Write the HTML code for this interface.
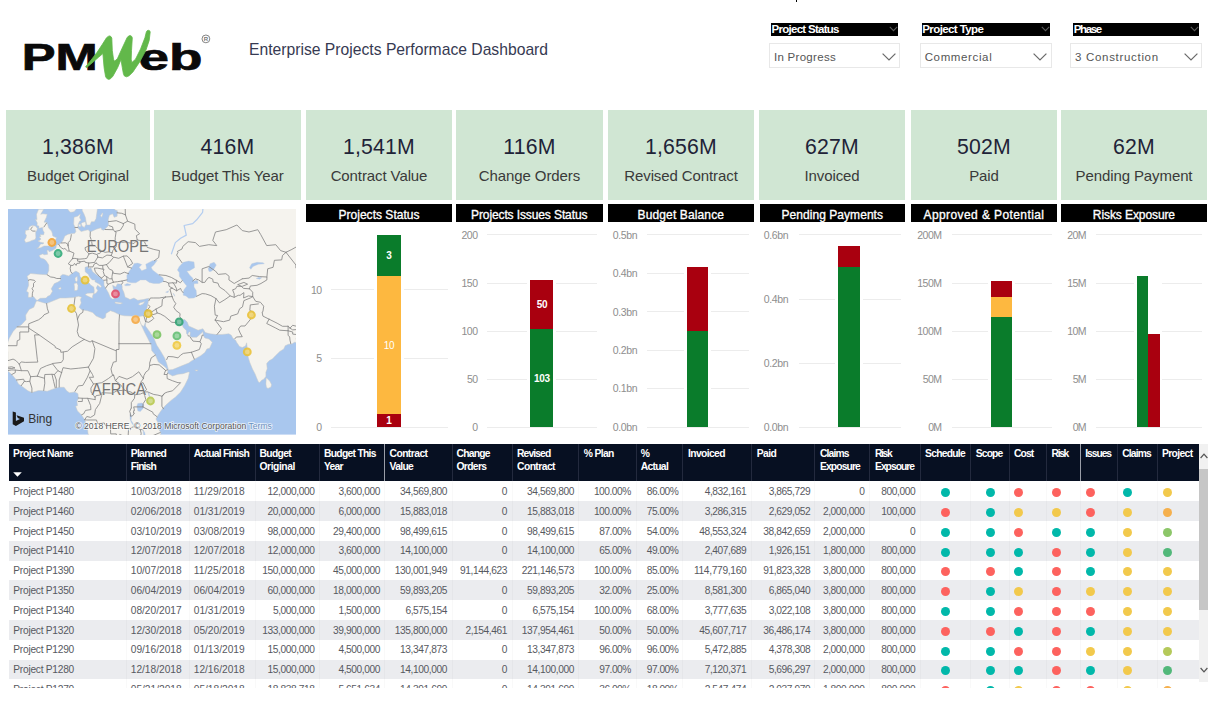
<!DOCTYPE html>
<html lang="en"><head><meta charset="utf-8"><title>Enterprise Projects Performace Dashboard</title>
<style>
*{box-sizing:border-box;margin:0;padding:0}
html,body{width:1214px;height:703px;background:#fff;overflow:hidden}
body{position:relative;font-family:"Liberation Sans",sans-serif;color:#333;-webkit-font-smoothing:antialiased}
.abs{position:absolute}
.card{position:absolute;top:110px;height:90px;background:#d0e6d3;text-align:center}
.card .v{position:absolute;left:0;right:0;top:24px;font-size:22px;line-height:26px;color:#1f2338;letter-spacing:0.2px;transform:scaleX(.965)}
.card .l{position:absolute;left:0;right:0;top:56px;font-size:15px;line-height:20px;color:#3a3a3a;letter-spacing:-0.1px}
.ch{position:absolute;top:204px;height:17px;background:#000;color:#fff;font-size:13px;line-height:17px;text-align:center;letter-spacing:-0.35px;font-weight:400}
.gl{position:absolute;height:1px;background:#ececec}
.ax{position:absolute;font-size:9.5px;line-height:12px;color:#858585;text-align:right;width:40px;letter-spacing:-0.3px}
.bar{position:absolute}
.g{background:#0a7c2b}.y{background:#fdb840}.r{background:#a9000f}
.dl{position:absolute;color:#fff;font-size:10px;line-height:11px;letter-spacing:-0.3px;text-align:center;width:30px;font-weight:700}
.sh{position:absolute;top:23px;height:12px;background:#000;color:#fff;font-size:10px;line-height:12px;letter-spacing:-0.4px;padding-left:1px;white-space:nowrap}
.sd{position:absolute;top:42px;height:26px;border:1px solid #e9e9e9;background:#fff;font-size:11px;line-height:24px;color:#444;padding-left:6px;white-space:nowrap}
.th{position:absolute;top:444px;height:37.5px;background:#080f24}
.ht{position:absolute;color:#fff;font-size:9.5px;line-height:13px;font-weight:700;letter-spacing:-0.45px;white-space:nowrap}
.sep{position:absolute;top:444px;height:37.5px;width:1px;background:#2a3145}
.row{position:absolute;left:8px;width:1191px;height:20px}
.row.alt{background:#ebecee}
.c{position:absolute;font-size:10px;line-height:20px;color:#4a4a4a;white-space:nowrap;letter-spacing:-0.25px}
.cr{text-align:right}
.dot{position:absolute;width:9px;height:9px;border-radius:50%}
</style></head>
<body>
<div class="abs" id="logo" style="left:0;top:0;width:240px;height:100px">
<svg width="240" height="100" viewBox="0 0 240 100" style="position:absolute;left:0;top:0">
<text x="21.8" y="69.6" font-family="Liberation Sans, sans-serif" font-weight="700" font-size="37.5" fill="#0a0a0a" stroke="#0a0a0a" stroke-width="0.7" textLength="76" lengthAdjust="spacingAndGlyphs">PM</text>
<text x="138.5" y="69.6" font-family="Liberation Sans, sans-serif" font-weight="700" font-size="37.5" fill="#0a0a0a" stroke="#0a0a0a" stroke-width="0.7" textLength="64" lengthAdjust="spacingAndGlyphs">eb</text>
<path d="M85.6 66.8 L91.1 60.0 L97.1 52.3 L102.2 44.6 L106.5 37.8 L108.2 36.4 L109.6 35.9 L110.9 36.5 L111.8 38.0 L112.3 50.6 L113.5 59.2 L114.6 61.3 L117.6 58.3 L121.8 48.9 L127.0 37.8 L128.5 36.1 L130.1 35.5 L131.5 36.2 L132.3 37.8 L131.5 50.6 L131.2 59.2 L131.8 62.6 L135.5 59.2 L140.6 48.9 L144.9 37.8 L146.4 31.8 L147.3 30.6 L148.5 30.3 L149.7 30.8 L150.2 32.0 L149.2 40.4 L145.8 50.6 L139.8 61.7 L132.9 72.0 L129.1 75.8 L126.5 76.8 L124.4 76.0 L123.4 73.7 L122.3 67.7 L121.0 59.6 L117.6 67.7 L112.9 76.2 L110.7 78.6 L108.9 79.4 L106.9 78.6 L105.6 76.7 L104.1 67.7 L102.9 53.6 L98.8 57.0 L92.0 63.0 L86.4 67.7 Z" fill="#62b84a" stroke="#62b84a" stroke-width="0.8" stroke-linejoin="round"/>
<circle cx="205.9" cy="38.9" r="3.9" fill="none" stroke="#777" stroke-width="0.9"/>
<text x="205.9" y="41" text-anchor="middle" font-family="Liberation Sans, sans-serif" font-weight="700" font-size="6" fill="#777">R</text>
</svg></div>
<div class="abs" style="left:249px;top:38.7px;font-size:15.7px;line-height:22px;color:#363a52;white-space:nowrap;letter-spacing:0px">Enterprise Projects Performace Dashboard</div>
<div class="abs" style="left:795.9px;top:0;width:1.3px;height:2px;background:#000"></div>
<div class="abs" style="left:771.2px;top:23.2px;width:126.9px;height:12.6px;background:#000;overflow:hidden"></div>
<div class="abs" style="left:0;top:23.2px;width:1214px;height:12.6px;overflow:hidden"><div class="abs" style="left:0;top:-23.2px"><div class="abs" style="left:771.50px;top:21.72px;font-size:11.5px;line-height:14px;color:#fff;white-space:nowrap;letter-spacing:-0.718px;font-weight:700">Project Status</div></div></div>
<svg class="abs" style="left:888.9px;top:26.4px" width="9" height="6" viewBox="0 0 9 6"><path d="M0.8 0.8 L4.5 4.6 L8.2 0.8" fill="none" stroke="#5a5a5a" stroke-width="1.1"/></svg>
<div class="abs" style="left:769.2px;top:42.6px;width:130.7px;height:25.3px;border:1px solid #e8e8e8;background:#fff"></div>
<div class="abs" style="left:773.90px;top:50.12px;font-size:11.5px;line-height:14px;color:#555;white-space:nowrap;letter-spacing:0.300px">In Progress</div>
<svg class="abs" style="left:881.5px;top:52.6px" width="14" height="8" viewBox="0 0 14 8"><path d="M0.6 0.6 L7 7 L13.4 0.6" fill="none" stroke="#6a6a6a" stroke-width="1.2"/></svg>
<div class="abs" style="left:922px;top:23.2px;width:128.0px;height:12.6px;background:#000;overflow:hidden"></div>
<div class="abs" style="left:0;top:23.2px;width:1214px;height:12.6px;overflow:hidden"><div class="abs" style="left:0;top:-23.2px"><div class="abs" style="left:922.30px;top:21.72px;font-size:11.5px;line-height:14px;color:#fff;white-space:nowrap;letter-spacing:-0.606px;font-weight:700">Project Type</div></div></div>
<svg class="abs" style="left:1040.8px;top:26.4px" width="9" height="6" viewBox="0 0 9 6"><path d="M0.8 0.8 L4.5 4.6 L8.2 0.8" fill="none" stroke="#5a5a5a" stroke-width="1.1"/></svg>
<div class="abs" style="left:920px;top:42.6px;width:131.7px;height:25.3px;border:1px solid #e8e8e8;background:#fff"></div>
<div class="abs" style="left:924.70px;top:50.12px;font-size:11.5px;line-height:14px;color:#555;white-space:nowrap;letter-spacing:0.629px">Commercial</div>
<svg class="abs" style="left:1033.3px;top:52.6px" width="14" height="8" viewBox="0 0 14 8"><path d="M0.6 0.6 L7 7 L13.4 0.6" fill="none" stroke="#6a6a6a" stroke-width="1.2"/></svg>
<div class="abs" style="left:1073.4px;top:23.2px;width:126.0px;height:12.6px;background:#000;overflow:hidden"></div>
<div class="abs" style="left:0;top:23.2px;width:1214px;height:12.6px;overflow:hidden"><div class="abs" style="left:0;top:-23.2px"><div class="abs" style="left:1073.70px;top:21.72px;font-size:11.5px;line-height:14px;color:#fff;white-space:nowrap;letter-spacing:-1.346px;font-weight:700">Phase</div></div></div>
<svg class="abs" style="left:1190.2px;top:26.4px" width="9" height="6" viewBox="0 0 9 6"><path d="M0.8 0.8 L4.5 4.6 L8.2 0.8" fill="none" stroke="#5a5a5a" stroke-width="1.1"/></svg>
<div class="abs" style="left:1070.4px;top:42.6px;width:131.6px;height:25.3px;border:1px solid #e8e8e8;background:#fff"></div>
<div class="abs" style="left:1075.10px;top:50.12px;font-size:11.5px;line-height:14px;color:#555;white-space:nowrap;letter-spacing:0.681px">3 Construction</div>
<svg class="abs" style="left:1183.6px;top:52.6px" width="14" height="8" viewBox="0 0 14 8"><path d="M0.6 0.6 L7 7 L13.4 0.6" fill="none" stroke="#6a6a6a" stroke-width="1.2"/></svg>
<div class="card" style="left:6px;width:144px"><div class="v">1,386M</div><div class="l">Budget Original</div></div>
<div class="card" style="left:154px;width:147px"><div class="v">416M</div><div class="l">Budget This Year</div></div>
<div class="card" style="left:306px;width:146px"><div class="v">1,541M</div><div class="l">Contract Value</div></div>
<div class="card" style="left:456px;width:147px"><div class="v">116M</div><div class="l">Change Orders</div></div>
<div class="card" style="left:608px;width:146px"><div class="v">1,656M</div><div class="l">Revised Contract</div></div>
<div class="card" style="left:759px;width:146px"><div class="v">627M</div><div class="l">Invoiced</div></div>
<div class="card" style="left:911px;width:146px"><div class="v">502M</div><div class="l">Paid</div></div>
<div class="card" style="left:1061px;width:146px"><div class="v">62M</div><div class="l">Pending Payment</div></div>
<svg class="abs" style="left:7.5px;top:209.4px" width="288.3" height="225.6" viewBox="0 0 288.3 225.6">
<rect width="288.3" height="225.6" fill="#a9c7ee"/>
<g fill="#f5f3ee" stroke="#c9cbc9" stroke-width="0.5" stroke-linejoin="round">
<path d="M107.0 -18.1 L107.0 -3.4 L106.7 0.8 L109.4 1.8 L109.1 7.3 L106.2 8.3 L104.6 4.8 L101.4 6.3 L100.3 10.3 L100.5 16.5 L97.3 19.8 L96.0 21.2 L93.8 20.7 L93.0 18.8 L88.2 20.2 L82.3 23.0 L80.2 20.7 L76.7 21.6 L73.2 22.5 L70.8 20.2 L69.7 17.9 L70.3 15.1 L71.6 12.2 L73.2 11.2 L71.6 8.8 L72.4 4.8 L69.5 7.3 L66.0 8.3 L65.7 15.1 L67.0 18.4 L67.9 22.5 L66.8 24.3 L62.8 24.8 L60.1 25.2 L56.9 27.0 L55.0 31.4 L53.1 34.0 L50.7 35.3 L48.3 36.2 L48.0 39.1 L44.5 41.6 L41.1 42.7 L40.5 41.2 L38.9 41.2 L39.7 45.3 L36.5 45.7 L34.4 44.9 L31.1 46.5 L32.5 48.9 L36.0 50.1 L38.1 51.7 L40.8 56.0 L40.8 61.3 L39.2 65.8 L33.8 65.4 L28.5 65.1 L22.6 64.5 L19.1 67.3 L20.4 71.3 L20.7 76.3 L18.5 82.2 L20.4 83.6 L20.1 88.3 L22.8 88.3 L25.5 87.6 L27.1 89.6 L29.0 91.6 L32.2 89.3 L38.1 89.1 L39.7 87.3 L42.1 86.3 L44.5 82.2 L43.2 79.8 L46.4 74.5 L49.9 73.1 L52.6 71.3 L52.3 67.3 L54.5 65.4 L56.9 65.8 L60.6 66.9 L64.1 64.3 L67.9 62.1 L71.3 64.0 L72.1 67.6 L73.7 69.5 L77.0 72.0 L81.0 73.8 L82.6 75.9 L85.8 78.0 L86.3 81.8 L85.9 85.1 L88.2 83.9 L89.8 81.5 L88.2 79.1 L89.6 76.3 L92.2 78.4 L93.6 77.7 L92.0 75.6 L86.9 72.7 L87.1 71.1 L84.2 70.9 L81.5 68.0 L80.4 65.4 L77.2 62.8 L77.0 58.3 L80.7 57.2 L80.4 59.8 L82.9 58.7 L84.7 62.8 L88.2 65.4 L91.4 67.6 L93.6 69.5 L96.0 71.3 L96.0 76.3 L97.6 79.1 L100.5 83.9 L102.2 88.3 L104.3 90.0 L106.2 90.0 L105.6 86.9 L108.3 85.9 L107.2 83.2 L105.4 80.5 L104.6 76.3 L107.8 78.0 L109.4 74.8 L113.7 75.2 L114.2 77.7 L114.2 79.8 L115.8 83.2 L117.2 88.3 L119.8 89.3 L122.0 90.6 L126.0 89.0 L129.8 91.3 L135.1 90.6 L139.4 89.6 L141.0 89.3 L140.2 93.3 L139.1 98.5 L137.5 103.0 L135.9 106.8 L131.1 107.4 L127.1 106.1 L124.1 107.1 L116.4 106.8 L111.5 105.8 L106.2 103.0 L102.4 101.7 L97.9 104.6 L97.6 108.3 L94.9 109.9 L88.2 107.1 L84.7 103.6 L79.4 101.7 L73.7 100.8 L71.1 98.2 L73.2 93.9 L72.4 90.3 L73.7 88.3 L70.5 87.3 L65.4 88.6 L57.7 89.0 L52.0 89.0 L44.0 92.3 L38.6 94.6 L36.2 93.9 L29.8 92.0 L28.2 92.3 L25.8 98.2 L21.2 100.4 L17.7 106.1 L18.0 110.8 L13.2 116.0 L9.2 117.9 L5.1 122.4 L1.1 129.5 L-1.6 137.6 L-0.2 143.3 L-0.2 151.7 L-2.9 155.4 L-1.0 161.4 L3.8 165.5 L8.4 171.0 L10.5 175.0 L14.5 177.7 L19.9 181.8 L23.9 183.4 L30.6 181.5 L36.0 181.8 L39.2 182.3 L45.3 179.9 L50.7 178.3 L56.1 178.3 L58.7 181.8 L61.4 183.7 L66.8 182.9 L70.0 184.7 L70.3 189.8 L68.9 192.5 L69.5 196.5 L67.6 197.3 L69.5 201.9 L73.5 205.9 L76.7 210.8 L79.4 218.1 L79.9 223.5 L81.0 229.0 L81.0 238.7 L152.5 238.7 L152.5 229.0 L152.8 223.5 L149.3 218.1 L149.9 213.5 L148.0 210.0 L150.1 205.9 L153.9 200.6 L157.9 196.0 L163.3 191.2 L167.3 188.2 L172.6 183.1 L176.7 176.4 L180.1 169.6 L181.5 163.3 L180.1 162.9 L175.1 164.7 L170.0 165.3 L164.6 166.9 L160.6 164.7 L159.5 163.9 L160.0 161.4 L157.9 158.7 L153.9 155.4 L150.4 153.1 L147.4 146.1 L143.7 141.6 L143.2 136.2 L139.7 129.2 L136.5 123.0 L134.0 117.6 L131.4 111.1 L133.0 115.4 L135.7 117.6 L136.5 115.4 L137.8 112.4 L137.5 117.0 L141.8 123.0 L145.8 128.9 L148.8 136.2 L152.5 141.9 L156.6 148.9 L158.7 154.5 L160.0 159.2 L160.6 160.9 L164.6 160.6 L172.6 157.3 L180.7 154.0 L183.9 151.7 L188.7 148.9 L192.7 146.7 L196.8 143.6 L198.9 139.9 L201.6 139.3 L204.3 133.3 L201.0 130.1 L196.8 128.9 L195.2 126.2 L194.9 122.4 L194.1 123.6 L191.9 125.4 L188.7 128.3 L184.7 128.3 L182.3 128.0 L182.0 125.9 L182.3 123.3 L181.2 122.7 L180.1 124.5 L180.1 126.5 L178.5 124.5 L178.3 121.5 L175.3 118.5 L174.0 115.4 L172.6 112.7 L174.0 110.8 L176.7 110.5 L179.3 113.3 L180.7 117.0 L184.7 118.8 L190.1 121.2 L194.9 119.7 L197.3 123.6 L202.1 124.8 L208.8 125.6 L214.2 125.4 L220.9 124.8 L223.3 126.2 L224.9 129.2 L227.6 131.2 L228.9 133.8 L231.6 137.6 L234.3 138.5 L237.5 137.0 L238.6 133.8 L239.1 137.6 L239.1 143.3 L240.4 148.9 L241.8 153.4 L244.5 160.0 L247.1 165.0 L248.5 168.5 L250.4 172.9 L251.8 173.5 L253.6 171.2 L255.7 170.2 L257.9 167.4 L257.9 163.3 L259.2 159.8 L258.7 154.5 L261.1 151.7 L264.6 149.8 L267.2 147.0 L271.8 142.5 L275.8 139.9 L277.2 136.7 L280.4 135.3 L283.9 135.0 L286.5 133.3 L290.0 133.6 L291.4 138.2 L293.2 141.0 L296.5 146.1 L296.7 151.7 L304.0 151.7 L304.0 -18.1 Z"/>
<path d="M28.7 39.5 L32.7 38.7 L36.0 37.0 L40.5 37.0 L44.8 36.6 L47.8 34.9 L46.1 33.6 L48.6 28.8 L44.8 27.0 L44.3 24.3 L43.5 22.1 L40.5 18.8 L39.7 15.6 L38.4 13.2 L36.0 13.2 L37.0 11.2 L38.4 8.3 L39.2 5.3 L34.9 4.8 L32.7 5.3 L35.7 0.3 L30.6 0.3 L28.5 5.3 L29.0 10.8 L27.4 10.3 L29.3 14.1 L29.0 16.5 L30.9 17.0 L30.9 19.3 L34.6 18.4 L34.9 21.2 L36.2 23.4 L35.7 25.7 L31.9 25.7 L33.0 27.5 L31.1 27.9 L33.0 30.1 L31.4 31.4 L29.8 31.9 L32.5 33.2 L36.0 34.0 L34.6 34.9 L32.7 34.9 L30.3 38.7 Z"/>
<path d="M27.1 30.6 L23.9 31.4 L21.2 32.7 L17.7 33.6 L16.4 31.0 L18.0 28.8 L18.5 26.1 L17.2 24.8 L17.5 21.6 L21.2 20.7 L20.7 19.3 L21.8 17.4 L24.4 16.5 L27.4 17.0 L29.3 19.3 L29.0 21.2 L27.7 23.0 L27.7 25.7 L27.9 28.4 Z"/>
<path d="M77.2 85.6 L79.6 84.2 L85.8 83.9 L84.5 87.3 L84.5 89.3 L82.3 88.3 L78.0 86.3 Z"/>
<path d="M66.0 74.8 L68.7 73.8 L70.0 76.3 L69.7 80.8 L68.1 81.5 L66.5 81.5 L66.5 78.0 Z"/>
<path d="M67.0 69.1 L69.2 67.3 L69.5 70.9 L68.7 73.1 L67.3 71.6 Z"/>
<path d="M107.0 93.0 L109.7 93.3 L114.5 94.1 L112.3 95.1 L108.3 94.6 L107.0 94.1 Z"/>
<path d="M130.6 94.9 L132.4 93.8 L136.7 92.6 L135.1 94.9 L132.4 96.2 L130.8 95.7 Z"/>
<path d="M258.1 169.1 L259.2 169.6 L261.9 172.3 L263.5 175.6 L263.0 178.0 L260.0 179.4 L258.4 178.3 L257.9 175.0 L258.1 171.5 Z"/>
<path d="M50.4 79.4 L52.6 78.2 L53.2 79.4 L52.0 80.5 Z"/>
<path d="M186.8 161.0 L190.1 161.1 L188.7 162.0 Z"/>
<path d="M73.2 14.6 L74.6 13.4 L77.5 12.7 L77.8 15.6 L76.4 18.4 L74.0 17.0 Z"/>
<path d="M70.3 15.6 L72.4 15.1 L72.9 17.4 L71.1 17.7 Z"/>
<path d="M92.5 6.8 L94.4 3.8 L94.9 4.8 L93.8 8.3 Z"/>
<path d="M56.9 -18.1 L57.4 -5.0 L59.0 -0.8 L61.7 2.8 L62.8 3.3 L66.0 2.8 L69.5 -1.3 L72.1 -3.4 L74.0 -1.8 L74.3 1.8 L75.9 4.8 L77.5 8.8 L78.0 12.2 L78.6 15.1 L78.8 16.0 L82.1 16.0 L82.6 14.6 L83.4 12.7 L86.3 12.7 L88.0 9.8 L88.8 4.3 L89.3 0.3 L91.7 -1.3 L93.6 -3.9 L94.7 -7.1 L94.7 -18.1 Z"/>
</g>
<g fill="#a9c7ee" stroke="#c0cddc" stroke-width="0.4" stroke-linejoin="round">
<path d="M119.0 72.7 L119.0 70.9 L118.8 66.5 L120.9 62.8 L123.6 59.1 L126.3 54.4 L129.8 54.1 L133.8 55.6 L131.1 58.3 L133.8 61.7 L138.6 59.8 L137.8 55.2 L144.5 51.7 L149.3 51.3 L145.8 56.0 L143.2 58.3 L144.5 61.0 L150.4 65.4 L155.2 69.1 L155.5 72.4 L151.2 74.5 L145.8 74.5 L141.3 73.4 L137.8 70.9 L132.4 70.9 L127.9 73.8 L123.1 73.8 Z"/>
<path d="M116.4 75.9 L119.0 74.5 L123.1 75.6 L121.5 76.6 L117.7 76.8 Z"/>
<path d="M175.3 53.3 L180.7 52.1 L186.0 52.9 L186.6 58.7 L181.5 61.7 L178.8 62.1 L182.0 66.5 L184.7 69.1 L185.5 72.0 L189.5 71.3 L190.1 74.5 L186.0 74.8 L186.0 78.0 L188.2 81.5 L188.7 87.3 L186.0 89.0 L180.7 89.3 L178.0 86.9 L175.3 86.3 L175.1 83.2 L176.1 80.5 L178.8 77.0 L176.7 74.5 L174.0 70.9 L171.3 67.3 L171.3 63.6 L169.4 61.0 L171.3 57.5 Z"/>
<path d="M200.2 59.8 L202.1 54.8 L206.1 53.3 L208.3 56.0 L205.6 60.6 L202.9 62.5 L201.0 62.5 Z"/>
<path d="M241.5 58.7 L243.7 54.8 L249.0 53.3 L255.2 53.7 L256.3 54.8 L250.4 55.2 L245.0 57.5 L242.9 60.2 Z"/>
<path d="M248.2 69.5 L250.9 68.2 L253.8 68.7 L251.7 70.2 Z"/>
<path d="M129.0 196.5 L129.8 194.4 L133.8 194.1 L135.9 195.7 L135.1 199.2 L132.4 202.4 L129.8 201.9 L129.0 197.9 Z"/>
<path d="M122.5 204.3 L123.6 207.3 L123.1 211.3 L125.7 215.4 L127.1 218.9 L126.0 217.3 L123.3 213.5 L122.0 210.0 L122.0 205.9 Z"/>
<path d="M135.1 221.1 L136.7 223.5 L137.5 227.6 L136.5 233.1 L135.7 227.6 L135.4 224.3 Z"/>
<path d="M140.5 183.1 L141.3 185.8 L142.1 188.2 L141.0 187.2 L140.2 184.5 Z"/>
<path d="M157.6 83.2 L160.6 81.8 L160.0 83.6 Z"/>
<path d="M165.1 84.2 L166.2 86.6 L167.0 87.3 L165.9 84.9 Z"/>
</g>
<path d="M163.3 45.3 L167.3 33.6 L172.6 29.2 L178.3 26.1 L176.1 16.5 L184.7 14.6 L188.7 10.8 L194.6 3.3 L195.4 -5.0" fill="none" stroke="#b4cdf0" stroke-width="1.2" stroke-linejoin="round"/>
<g fill="none" stroke="#888" stroke-width="1" stroke-linejoin="round" stroke-linecap="round" opacity="0.85">
<path d="M20.4 71.3 L22.0 70.6 L26.3 71.3 L27.4 72.4 L25.5 74.5 L25.5 78.0 L23.9 79.4 L25.2 81.5 L24.4 84.2 L24.2 87.6 M39.2 65.8 L42.7 68.0 L45.9 68.4 L48.8 69.5 L52.6 69.5 M50.7 35.3 L52.6 38.3 L55.3 40.0 L56.9 39.5 L59.5 42.0 L61.2 42.0 L66.0 44.1 L64.4 49.7 M64.4 49.7 L60.3 54.8 L62.8 56.4 L62.2 59.4 L62.8 62.8 L64.1 64.3 M53.1 34.0 L57.4 33.8 L59.5 34.9 L60.1 36.8 M60.1 36.8 L60.3 33.6 L62.2 31.4 L62.8 28.8 L63.3 25.7 M60.1 36.8 L60.6 39.1 L61.2 42.0 M67.0 18.4 L69.7 18.6 M82.3 23.0 L82.1 27.5 L83.4 31.4 L84.2 35.7 M84.2 35.7 L82.3 36.2 L77.0 38.7 L77.5 41.2 L81.0 44.9 M81.0 44.9 L78.8 49.3 L76.7 49.7 L72.1 50.1 L69.7 50.1 M64.4 49.7 L67.0 49.3 L69.7 50.1 M69.7 50.1 L69.5 52.1 L72.1 52.5 L71.9 54.1 L68.9 54.4 L68.1 56.4 L66.5 54.4 L65.2 56.4 L62.8 56.4 M71.9 52.9 L76.7 52.1 L77.2 53.3 L80.7 54.1 M80.7 54.1 L86.9 53.3 L87.1 52.5 L89.8 48.1 M81.0 44.9 L84.2 44.1 L89.3 45.7 L89.8 48.1 M80.7 54.1 L80.4 57.2 M80.4 57.9 L85.0 57.9 L86.1 55.2 L88.2 54.1 M84.2 35.7 L87.7 37.4 L89.3 39.1 L93.8 42.0 M93.8 42.0 L97.1 43.3 L100.0 42.9 L104.3 43.7 M89.6 44.9 L92.2 44.1 L93.8 42.0 M89.8 48.1 L94.4 48.9 L98.9 46.1 L103.2 46.5 M103.2 46.5 L104.3 43.7 L104.8 41.6 L108.3 37.4 L107.2 33.6 L107.2 28.8 L108.1 23.0 L107.0 22.5 L105.1 20.7 L97.1 20.5 M107.0 22.5 L112.3 21.2 L115.3 16.5 L115.3 14.6 M100.4 12.7 L108.3 11.7 L115.3 14.6 M105.1 20.7 L104.6 17.9 L101.1 16.7 M109.1 3.8 L113.7 4.3 L117.4 5.8 M117.4 5.8 L119.6 12.2 L115.3 14.6 M117.4 5.8 L117.2 -0.8 L119.0 -4.4 M119.6 12.2 L126.8 15.1 L127.1 20.2 L131.6 24.8 L128.4 26.6 L129.2 31.0 M107.2 33.6 L116.4 33.2 L126.0 34.5 L129.2 31.0 M129.2 31.0 L136.2 32.3 L139.1 38.3 L145.8 40.4 L151.5 41.6 L150.7 48.5 L146.4 51.7 M103.2 46.5 L105.4 48.1 L110.7 49.3 L115.3 47.1 L119.6 57.9 L123.6 59.1 M115.3 47.1 L119.0 46.9 L122.3 50.1 L124.7 54.4 L119.6 57.9 M105.4 48.5 L101.1 53.7 L98.4 55.6 M98.4 55.6 L94.7 56.4 L91.2 56.4 L88.2 54.1 M98.4 55.6 L101.4 60.2 L104.3 61.3 L104.8 62.8 L105.4 64.3 L112.1 65.1 L116.4 63.2 L120.6 64.7 M94.7 56.4 L94.9 60.2 L96.0 60.2 L95.2 62.5 L96.5 66.5 L93.6 69.1 M94.9 60.2 L89.3 59.1 L86.3 59.1 L87.4 62.8 L91.2 67.3 L93.6 69.1 M104.8 62.8 L104.0 67.3 L104.0 69.8 L105.4 73.2 M105.4 73.2 L109.7 72.7 L113.9 72.0 L114.8 73.6 L113.7 75.2 M113.9 72.0 L119.0 70.9 M96.0 71.3 L98.9 70.9 L98.9 74.5 L100.3 75.2 L97.6 79.1 M100.3 75.2 L105.4 73.2 M96.5 66.5 L98.7 67.6 L98.9 70.9 M98.7 67.6 L101.6 69.8 L104.0 69.8 M141.0 91.6 L142.4 89.0 L145.8 89.0 L151.2 89.0 L157.6 88.0 M157.6 88.0 L164.1 87.6 M164.1 87.6 L161.9 80.1 L164.1 79.1 M164.1 79.1 L161.1 77.3 L160.6 74.1 L157.9 72.7 L155.5 72.4 M151.2 65.8 L157.9 66.5 L163.3 68.4 L168.4 71.3 L168.9 71.6 M168.4 71.3 L168.6 74.1 L164.6 73.8 L160.6 74.1 M164.6 73.8 L166.2 75.2 L168.6 79.8 L168.6 81.8 M168.9 71.6 L172.4 73.8 L174.2 71.6 M164.1 79.1 L168.6 81.8 L172.6 79.4 L173.4 81.5 L175.1 83.6 M157.6 88.0 L154.4 90.3 L153.9 96.9 L148.0 100.1 M148.0 100.1 L142.6 103.6 L139.9 102.3 M138.1 101.1 L139.9 100.4 L142.1 97.5 L140.5 96.2 M139.4 102.3 L139.1 106.1 L137.8 112.4 M135.9 106.8 L137.5 112.4 M137.8 112.7 L140.7 113.3 L144.5 110.8 L145.8 109.3 L143.2 106.1 L148.5 104.6 L149.1 103.9 M149.1 103.9 L148.0 100.1 M149.1 103.9 L152.3 104.9 L156.8 107.4 L163.8 113.3 L168.6 113.6 L171.3 113.9 L173.7 115.4 M168.6 113.6 L170.8 110.8 L172.6 110.8 M164.1 87.6 L165.7 91.6 L167.8 94.6 L165.7 98.2 L167.8 101.4 L172.1 104.6 L171.8 107.7 L174.0 110.8 M158.7 150.6 L160.0 147.5 L165.1 147.8 L170.0 148.9 L172.6 146.1 L175.3 144.4 L183.4 143.3 M183.4 143.3 L186.3 150.1 M183.4 143.3 L191.4 140.5 L193.3 134.7 L191.9 132.7 L185.0 132.1 L182.3 128.3 M191.9 132.7 L193.5 128.9 L194.1 126.2 L195.2 126.2 M180.1 126.8 L181.5 127.1 M188.5 87.3 L194.1 84.6 L197.6 84.9 L202.9 86.6 L208.0 89.6 M208.0 89.6 L206.4 97.2 L207.2 106.1 L209.6 106.5 L207.2 111.1 M207.2 111.1 L213.4 119.4 L212.3 121.5 L209.1 125.4 M207.2 111.1 L215.5 112.7 L221.7 111.1 L222.8 107.1 L229.7 104.9 L231.6 99.8 L234.5 97.9 L235.9 91.6 L242.3 89.0 L244.7 87.6 M208.0 89.6 L211.5 93.9 L216.9 90.6 L222.2 86.9 L226.2 88.3 L230.3 86.3 L232.1 86.3 L235.9 83.6 L235.6 89.0 L240.4 86.9 L244.7 87.6 M222.2 86.9 L216.9 81.5 L211.5 78.0 L209.9 74.1 L205.1 73.1 L204.8 70.2 L201.0 68.4 L198.9 70.2 L196.8 73.4 L194.1 73.4 L194.1 59.8 L200.8 57.5 L207.5 62.1 L210.2 65.4 L217.9 64.7 L221.1 67.3 L220.9 70.9 L226.2 74.5 L232.9 70.6 L234.3 69.8 M194.1 73.4 L190.6 70.9 L187.4 69.8 L184.7 72.0 M174.0 53.7 L170.0 48.1 L168.6 46.1 L170.0 43.3 L169.4 42.4 L174.0 40.0 L174.8 37.4 L180.1 32.7 L187.4 33.6 L191.4 37.4 L200.8 35.7 L208.8 36.6 L204.8 31.4 L207.5 23.0 L218.2 20.7 L228.9 16.0 L234.3 21.6 L241.0 23.0 L249.8 20.7 L252.8 25.7 L258.7 36.6 L267.8 35.7 L272.6 41.6 L278.0 43.3 M278.0 43.3 L274.5 46.5 L273.7 50.9 L266.4 51.3 L265.1 58.3 L259.7 59.8 L258.9 68.0 M234.3 69.8 L241.0 69.1 L244.2 66.5 L251.7 67.6 L258.9 68.0 L258.9 70.9 L253.0 74.5 L249.0 76.3 L242.3 77.0 L241.5 79.8 M241.5 79.8 L235.6 79.4 L232.9 77.0 L229.7 75.6 L232.9 74.5 L235.9 73.4 L239.6 75.2 L234.3 77.3 L228.9 77.3 L227.6 79.8 L224.6 80.8 L226.2 84.9 L226.2 88.3 M241.5 79.8 L244.7 83.2 L244.7 87.6 M244.7 87.6 L247.7 92.3 L252.5 93.3 L255.7 97.2 L254.9 102.7 L254.1 103.0 L254.9 107.1 L261.1 110.2 M250.4 94.9 L242.3 95.9 L241.8 101.4 L245.8 103.6 L243.7 107.7 L242.1 110.8 L237.0 117.0 L232.7 117.0 L230.5 120.0 L232.1 123.9 L234.3 127.7 L228.4 128.0 L226.8 129.8 M261.1 110.2 L258.7 114.5 L267.2 118.8 L271.8 121.2 L280.1 121.8 L280.1 117.3 M261.1 110.2 L269.1 114.2 L274.5 117.3 L280.1 117.3 M282.0 119.1 L284.7 116.3 L289.8 117.6 L290.8 120.3 L284.7 120.9 L282.0 119.1 M280.1 117.3 L282.0 119.1 M289.8 117.6 L295.9 113.9 L301.3 113.0 M280.1 121.8 L280.1 126.2 L281.7 128.0 L282.0 131.2 L282.8 134.7 M280.1 121.8 L284.7 123.0 L284.7 125.1 L291.6 125.9 L288.4 128.9 L288.4 130.4 L291.4 129.8 L292.2 136.4 L291.4 138.2 M292.2 134.7 L294.0 128.9 L297.8 124.5 L299.1 121.2 M278.0 43.3 L287.9 56.0 L287.9 59.1 L298.6 62.5 M278.0 43.3 L283.9 40.4 L290.6 36.6 L298.6 40.0 M38.6 94.6 L39.4 99.8 L40.8 103.6 L36.0 105.8 L34.4 108.0 L30.6 110.8 L20.7 114.8 L20.7 117.9 M9.2 117.9 L20.7 117.9 L20.7 123.0 L11.8 123.0 L11.8 130.6 L9.2 131.8 L8.9 136.7 L-1.6 136.7 M20.7 119.1 L31.1 125.9 L26.6 125.9 L29.3 150.3 L29.8 153.1 L17.2 153.4 L13.2 152.9 L11.3 155.1 M11.3 155.1 L7.8 151.5 L5.1 150.1 L-0.2 151.7 M31.1 125.9 L47.2 137.3 L47.2 138.5 L52.6 141.0 L52.8 143.3 L55.3 143.0 L59.5 142.2 L64.1 137.9 L76.2 130.4 M67.0 88.6 L66.0 95.9 L64.1 98.5 L68.4 104.3 L69.5 110.2 M69.5 110.2 L71.6 105.5 L74.8 103.3 L75.1 100.8 M69.5 110.2 L70.5 116.0 L69.2 122.4 L70.8 127.4 L76.2 130.4 M76.2 130.4 L82.1 133.0 L84.2 131.8 L108.3 141.9 L108.3 140.5 L111.0 140.5 L111.0 134.7 M111.5 105.8 L111.0 113.3 L111.0 134.7 M111.0 134.7 L142.9 134.7 M108.3 141.9 L108.3 152.6 L105.4 153.1 L103.0 160.0 L104.3 165.5 L105.6 166.3 M84.2 131.8 L86.9 139.6 L85.5 149.2 L80.4 158.1 M80.4 158.1 L70.8 159.2 L62.8 160.0 L55.0 158.7 L53.6 163.6 M55.3 143.0 L55.3 150.6 L53.4 153.4 L44.5 154.5 L44.5 154.8 L49.9 161.7 L53.6 163.6 M44.5 154.8 L38.6 156.7 L32.5 159.5 L29.3 167.2 M29.3 167.2 L36.5 169.3 L36.8 165.5 L44.0 165.3 L46.4 165.5 L49.9 161.7 M36.5 169.3 L36.8 174.2 L35.7 181.5 M44.0 165.3 L45.6 172.3 L47.2 178.8 M46.4 165.5 L48.3 171.0 L48.3 178.5 M53.6 163.6 L51.2 171.0 L51.2 178.0 M29.3 167.2 L22.6 167.7 L21.8 172.3 L23.9 179.1 L23.9 183.4 M22.6 167.7 L19.9 161.7 L13.4 161.7 L11.3 155.1 M21.8 172.3 L18.5 172.6 L16.4 172.3 L15.6 170.2 L8.4 171.0 M16.4 172.3 L13.2 176.7 M13.4 161.7 L7.3 161.1 L3.8 160.9 L-0.8 161.7 M7.3 161.1 L7.3 163.6 L3.8 165.5 M-1.0 158.4 L3.8 157.8 L7.0 158.9 L3.8 159.5 L-1.0 159.8 M80.4 158.1 L82.1 161.7 L79.4 168.3 L74.8 176.4 L70.3 176.9 L67.0 182.3 M82.1 161.7 L84.5 165.5 L85.5 168.3 L81.3 168.3 L85.5 175.0 L82.9 179.1 L83.1 183.1 L87.1 188.5 L87.1 190.6 M70.3 189.0 L74.3 189.3 L79.6 189.3 L87.1 190.6 M70.3 192.5 L74.3 192.5 L74.3 189.3 M85.5 175.0 L93.8 173.7 L100.3 169.6 L105.4 165.8 L105.6 166.3 M105.6 166.3 L107.5 171.8 L111.8 175.0 L117.4 181.5 M87.1 188.5 L88.2 186.6 L93.8 185.8 L93.8 183.7 L104.3 184.2 L109.7 181.5 L117.4 181.5 M93.8 185.8 L91.7 194.4 L87.4 200.6 L86.6 205.9 L82.6 208.4 L78.8 207.5 L76.7 210.8 M79.6 189.3 L82.6 196.5 L82.9 200.6 L77.5 201.4 L75.6 204.9 L73.7 205.7 M76.7 210.8 L78.8 211.0 L88.5 211.0 L89.6 214.6 L96.3 214.0 L97.6 216.7 L102.4 217.0 L102.7 224.9 L108.3 224.9 L108.3 229.0 M108.3 229.0 L111.8 225.4 L116.4 227.6 L121.7 231.5 L120.1 227.6 L120.6 219.4 L126.5 217.5 M107.5 171.8 L111.0 167.4 L119.0 170.2 L124.4 167.7 L130.8 162.8 L133.0 166.1 L135.4 169.6 M135.4 169.6 L135.9 166.6 L137.8 163.1 L140.7 160.9 L141.8 156.5 L141.6 154.2 L143.2 148.9 L147.4 146.1 M141.8 156.5 L145.8 155.4 L151.2 155.9 L157.6 161.4 L159.5 160.9 M157.6 161.4 L156.0 165.5 L159.0 165.5 L159.8 164.2 M159.0 165.5 L159.2 169.6 L164.6 171.8 L170.0 173.7 L172.6 173.7 L164.6 181.8 L159.2 183.1 L156.6 184.2 L153.9 187.2 M153.9 187.2 L149.9 186.1 L145.8 185.5 L140.5 183.3 L140.2 182.9 L136.2 182.9 L138.6 180.7 L135.1 173.7 L132.4 173.7 L135.4 169.6 M156.3 184.7 L153.9 187.7 L153.9 197.3 L155.5 199.8 M136.2 182.9 L135.1 183.9 L136.5 185.8 L137.8 190.6 L135.1 194.7 L134.9 197.9 M135.1 183.9 L132.4 185.0 L126.8 185.8 L126.5 189.3 L123.3 193.6 L123.3 199.0 M126.8 185.8 L123.1 183.1 L117.4 181.5 M134.9 197.9 L144.8 203.2 L145.0 204.6 L149.1 207.8 M134.9 197.9 L125.7 197.9 L126.5 201.6 L125.7 201.6 L125.5 204.1 L126.5 204.1 L124.4 207.0 L122.8 207.1 M123.3 199.0 L121.7 202.4 L122.3 204.1 L122.5 207.0 M126.5 217.5 L132.2 220.5 L135.1 220.8 M137.5 226.5 L144.5 226.8 L152.3 223.5 M132.2 220.5 L133.2 224.3 L132.4 229.0 M36.0 17.9 L38.6 14.1 M24.4 17.9 L22.6 20.2 L24.4 22.1 L27.1 22.1 M74.3 -1.3 L76.2 -7.1 L77.5 -12.5"/>
</g>
<text x="78.7" y="43.1" font-family="Liberation Sans, sans-serif" font-size="17" fill="#747474" stroke="#f4f2ec" stroke-width="0.5" paint-order="stroke" textLength="62.2" lengthAdjust="spacingAndGlyphs">EUROPE</text>
<text x="83.8" y="186.4" font-family="Liberation Sans, sans-serif" font-size="16.5" fill="#747474" stroke="#f4f2ec" stroke-width="0.5" paint-order="stroke" textLength="54.1" lengthAdjust="spacingAndGlyphs">AFRICA</text>
<circle cx="43.9" cy="33.5" r="4.4" fill="#f2a53a" fill-opacity="0.92"/><circle cx="43.9" cy="33.5" r="2.4" fill="#fff" fill-opacity="0.3"/>
<circle cx="50.1" cy="44.5" r="4.4" fill="#35ad7c" fill-opacity="0.92"/><circle cx="50.1" cy="44.5" r="2.4" fill="#fff" fill-opacity="0.3"/>
<circle cx="77.1" cy="71.2" r="4.4" fill="#e6c238" fill-opacity="0.92"/><circle cx="77.1" cy="71.2" r="2.4" fill="#fff" fill-opacity="0.3"/>
<circle cx="107.5" cy="84.9" r="4.4" fill="#e2506a" fill-opacity="0.92"/><circle cx="107.5" cy="84.9" r="2.4" fill="#fff" fill-opacity="0.3"/>
<circle cx="63.5" cy="99.5" r="4.4" fill="#e6c238" fill-opacity="0.92"/><circle cx="63.5" cy="99.5" r="2.4" fill="#fff" fill-opacity="0.3"/>
<circle cx="127.6" cy="110.6" r="4.4" fill="#f4aa48" fill-opacity="0.92"/><circle cx="127.6" cy="110.6" r="2.4" fill="#fff" fill-opacity="0.3"/>
<circle cx="140.2" cy="104.7" r="4.4" fill="#dfbc34" fill-opacity="0.92"/><circle cx="140.2" cy="104.7" r="2.4" fill="#fff" fill-opacity="0.3"/>
<circle cx="171.2" cy="112.9" r="4.4" fill="#35a475" fill-opacity="0.92"/><circle cx="171.2" cy="112.9" r="2.4" fill="#fff" fill-opacity="0.3"/>
<circle cx="149.0" cy="125.7" r="4.4" fill="#7cc466" fill-opacity="0.92"/><circle cx="149.0" cy="125.7" r="2.4" fill="#fff" fill-opacity="0.3"/>
<circle cx="168.9" cy="126.9" r="4.4" fill="#66c076" fill-opacity="0.92"/><circle cx="168.9" cy="126.9" r="2.4" fill="#fff" fill-opacity="0.3"/>
<circle cx="168.9" cy="136.4" r="4.4" fill="#efca44" fill-opacity="0.92"/><circle cx="168.9" cy="136.4" r="2.4" fill="#fff" fill-opacity="0.3"/>
<circle cx="243.4" cy="106.0" r="4.4" fill="#e9c23c" fill-opacity="0.92"/><circle cx="243.4" cy="106.0" r="2.4" fill="#fff" fill-opacity="0.3"/>
<circle cx="239.3" cy="142.9" r="4.4" fill="#e9c23c" fill-opacity="0.92"/><circle cx="239.3" cy="142.9" r="2.4" fill="#fff" fill-opacity="0.3"/>
<circle cx="142.5" cy="192.0" r="4.4" fill="#b9ca52" fill-opacity="0.92"/><circle cx="142.5" cy="192.0" r="2.4" fill="#fff" fill-opacity="0.3"/>
<path transform="translate(4.7,202.5)" d="M0 0 L3.2 1.1 L3.2 9.6 L7.3 7.6 L5.1 6.6 L3.9 3.7 L11.3 6.3 L11.3 9.8 L3.2 14.5 L0 12.7 Z" fill="#1a1a1a"/>
<text x="20.2" y="213.7" font-family="Liberation Sans, sans-serif" font-size="12" fill="#333" textLength="24" lengthAdjust="spacingAndGlyphs">Bing</text>
<text x="67.4" y="219.6" font-family="Liberation Sans, sans-serif" font-size="8.6" fill="#555" stroke="#fff" stroke-opacity="0.75" stroke-width="1.6" paint-order="stroke" textLength="196.5" lengthAdjust="spacingAndGlyphs">© 2018 HERE, © 2018 Microsoft Corporation <tspan fill="#6a8fc0">Terms</tspan></text>
</svg>
<div class="abs" style="left:306px;top:204.3px;width:146px;height:17.3px;background:#000;overflow:hidden"><div class="abs" style="left:-306px;top:-204.3px"><div class="abs" style="left:338.50px;top:207.64px;font-size:12px;line-height:14px;color:#fff;white-space:nowrap;letter-spacing:0.021px;-webkit-text-stroke:0.32px #fff">Projects Status</div></div></div>
<div class="gl" style="left:331.4px;width:116.60000000000002px;top:426.8px"></div>
<div class="abs" style="left:316.16px;top:420.96px;font-size:10.5px;line-height:13px;color:#8e8e8e;white-space:nowrap;letter-spacing:0.000px">0</div>
<div class="gl" style="left:331.4px;width:116.60000000000002px;top:358.1px"></div>
<div class="abs" style="left:316.16px;top:352.25px;font-size:10.5px;line-height:13px;color:#8e8e8e;white-space:nowrap;letter-spacing:0.000px">5</div>
<div class="gl" style="left:331.4px;width:116.60000000000002px;top:289.4px"></div>
<div class="abs" style="left:311.02px;top:283.53px;font-size:10.5px;line-height:13px;color:#8e8e8e;white-space:nowrap;letter-spacing:-0.701px">10</div>
<div class="abs" style="left:456px;top:204.3px;width:146.5px;height:17.3px;background:#000;overflow:hidden"><div class="abs" style="left:-456px;top:-204.3px"><div class="abs" style="left:471.05px;top:207.64px;font-size:12px;line-height:14px;color:#fff;white-space:nowrap;letter-spacing:-0.110px;-webkit-text-stroke:0.32px #fff">Projects Issues Status</div></div></div>
<div class="gl" style="left:487.3px;width:110.09999999999997px;top:426.8px"></div>
<div class="abs" style="left:472.16px;top:420.96px;font-size:10.5px;line-height:13px;color:#8e8e8e;white-space:nowrap;letter-spacing:0.000px">0</div>
<div class="gl" style="left:487.3px;width:110.09999999999997px;top:378.7px"></div>
<div class="abs" style="left:467.02px;top:372.86px;font-size:10.5px;line-height:13px;color:#8e8e8e;white-space:nowrap;letter-spacing:-0.701px">50</div>
<div class="gl" style="left:487.3px;width:110.09999999999997px;top:330.6px"></div>
<div class="abs" style="left:461.53px;top:324.76px;font-size:10.5px;line-height:13px;color:#8e8e8e;white-space:nowrap;letter-spacing:-0.526px">100</div>
<div class="gl" style="left:487.3px;width:110.09999999999997px;top:282.5px"></div>
<div class="abs" style="left:461.53px;top:276.66px;font-size:10.5px;line-height:13px;color:#8e8e8e;white-space:nowrap;letter-spacing:-0.526px">150</div>
<div class="gl" style="left:487.3px;width:110.09999999999997px;top:234.4px"></div>
<div class="abs" style="left:461.53px;top:228.56px;font-size:10.5px;line-height:13px;color:#8e8e8e;white-space:nowrap;letter-spacing:-0.526px">200</div>
<div class="abs" style="left:608px;top:204.3px;width:145.5px;height:17.3px;background:#000;overflow:hidden"><div class="abs" style="left:-608px;top:-204.3px"><div class="abs" style="left:637.55px;top:207.64px;font-size:12px;line-height:14px;color:#fff;white-space:nowrap;letter-spacing:0.128px;-webkit-text-stroke:0.32px #fff">Budget Balance</div></div></div>
<div class="gl" style="left:647px;width:102.20000000000005px;top:426.8px"></div>
<div class="abs" style="left:612.80px;top:420.96px;font-size:10.5px;line-height:13px;color:#8e8e8e;white-space:nowrap;letter-spacing:-0.394px">0.0bn</div>
<div class="gl" style="left:647px;width:102.20000000000005px;top:388.3px"></div>
<div class="abs" style="left:612.80px;top:382.48px;font-size:10.5px;line-height:13px;color:#8e8e8e;white-space:nowrap;letter-spacing:-0.394px">0.1bn</div>
<div class="gl" style="left:647px;width:102.20000000000005px;top:349.8px"></div>
<div class="abs" style="left:612.80px;top:344.00px;font-size:10.5px;line-height:13px;color:#8e8e8e;white-space:nowrap;letter-spacing:-0.394px">0.2bn</div>
<div class="gl" style="left:647px;width:102.20000000000005px;top:311.4px"></div>
<div class="abs" style="left:612.80px;top:305.52px;font-size:10.5px;line-height:13px;color:#8e8e8e;white-space:nowrap;letter-spacing:-0.394px">0.3bn</div>
<div class="gl" style="left:647px;width:102.20000000000005px;top:272.9px"></div>
<div class="abs" style="left:612.80px;top:267.04px;font-size:10.5px;line-height:13px;color:#8e8e8e;white-space:nowrap;letter-spacing:-0.394px">0.4bn</div>
<div class="gl" style="left:647px;width:102.20000000000005px;top:234.4px"></div>
<div class="abs" style="left:612.80px;top:228.56px;font-size:10.5px;line-height:13px;color:#8e8e8e;white-space:nowrap;letter-spacing:-0.394px">0.5bn</div>
<div class="abs" style="left:759.5px;top:204.3px;width:145.5px;height:17.3px;background:#000;overflow:hidden"><div class="abs" style="left:-759.5px;top:-204.3px"><div class="abs" style="left:781.50px;top:207.64px;font-size:12px;line-height:14px;color:#fff;white-space:nowrap;letter-spacing:0.051px;-webkit-text-stroke:0.32px #fff">Pending Payments</div></div></div>
<div class="gl" style="left:798.8px;width:101.80000000000007px;top:426.8px"></div>
<div class="abs" style="left:763.80px;top:420.96px;font-size:10.5px;line-height:13px;color:#8e8e8e;white-space:nowrap;letter-spacing:-0.394px">0.0bn</div>
<div class="gl" style="left:798.8px;width:101.80000000000007px;top:362.7px"></div>
<div class="abs" style="left:763.80px;top:356.83px;font-size:10.5px;line-height:13px;color:#8e8e8e;white-space:nowrap;letter-spacing:-0.394px">0.2bn</div>
<div class="gl" style="left:798.8px;width:101.80000000000007px;top:298.5px"></div>
<div class="abs" style="left:763.80px;top:292.70px;font-size:10.5px;line-height:13px;color:#8e8e8e;white-space:nowrap;letter-spacing:-0.394px">0.4bn</div>
<div class="gl" style="left:798.8px;width:101.80000000000007px;top:234.4px"></div>
<div class="abs" style="left:763.80px;top:228.56px;font-size:10.5px;line-height:13px;color:#8e8e8e;white-space:nowrap;letter-spacing:-0.394px">0.6bn</div>
<div class="abs" style="left:911px;top:204.3px;width:145.5px;height:17.3px;background:#000;overflow:hidden"><div class="abs" style="left:-911px;top:-204.3px"><div class="abs" style="left:923.50px;top:207.64px;font-size:12px;line-height:14px;color:#fff;white-space:nowrap;letter-spacing:0.408px;-webkit-text-stroke:0.32px #fff">Approved &amp; Potential</div></div></div>
<div class="gl" style="left:951.6px;width:100.69999999999993px;top:426.8px"></div>
<div class="abs" style="left:928.29px;top:420.96px;font-size:10.5px;line-height:13px;color:#8e8e8e;white-space:nowrap;letter-spacing:-0.875px">0M</div>
<div class="gl" style="left:951.6px;width:100.69999999999993px;top:378.7px"></div>
<div class="abs" style="left:922.80px;top:372.86px;font-size:10.5px;line-height:13px;color:#8e8e8e;white-space:nowrap;letter-spacing:-0.613px">50M</div>
<div class="gl" style="left:951.6px;width:100.69999999999993px;top:330.6px"></div>
<div class="abs" style="left:917.31px;top:324.76px;font-size:10.5px;line-height:13px;color:#8e8e8e;white-space:nowrap;letter-spacing:-0.525px">100M</div>
<div class="gl" style="left:951.6px;width:100.69999999999993px;top:282.5px"></div>
<div class="abs" style="left:917.31px;top:276.66px;font-size:10.5px;line-height:13px;color:#8e8e8e;white-space:nowrap;letter-spacing:-0.525px">150M</div>
<div class="gl" style="left:951.6px;width:100.69999999999993px;top:234.4px"></div>
<div class="abs" style="left:917.31px;top:228.56px;font-size:10.5px;line-height:13px;color:#8e8e8e;white-space:nowrap;letter-spacing:-0.525px">200M</div>
<div class="abs" style="left:1060.5px;top:204.3px;width:146.9000000000001px;height:17.3px;background:#000;overflow:hidden"><div class="abs" style="left:-1060.5px;top:-204.3px"><div class="abs" style="left:1092.85px;top:207.64px;font-size:12px;line-height:14px;color:#fff;white-space:nowrap;letter-spacing:-0.089px;-webkit-text-stroke:0.32px #fff">Risks Exposure</div></div></div>
<div class="gl" style="left:1095.8px;width:106.29999999999995px;top:426.8px"></div>
<div class="abs" style="left:1072.79px;top:420.96px;font-size:10.5px;line-height:13px;color:#8e8e8e;white-space:nowrap;letter-spacing:-0.875px">0M</div>
<div class="gl" style="left:1095.8px;width:106.29999999999995px;top:378.7px"></div>
<div class="abs" style="left:1072.79px;top:372.86px;font-size:10.5px;line-height:13px;color:#8e8e8e;white-space:nowrap;letter-spacing:-0.875px">5M</div>
<div class="gl" style="left:1095.8px;width:106.29999999999995px;top:330.6px"></div>
<div class="abs" style="left:1067.30px;top:324.76px;font-size:10.5px;line-height:13px;color:#8e8e8e;white-space:nowrap;letter-spacing:-0.613px">10M</div>
<div class="gl" style="left:1095.8px;width:106.29999999999995px;top:282.5px"></div>
<div class="abs" style="left:1067.30px;top:276.66px;font-size:10.5px;line-height:13px;color:#8e8e8e;white-space:nowrap;letter-spacing:-0.613px">15M</div>
<div class="gl" style="left:1095.8px;width:106.29999999999995px;top:234.4px"></div>
<div class="abs" style="left:1067.30px;top:228.56px;font-size:10.5px;line-height:13px;color:#8e8e8e;white-space:nowrap;letter-spacing:-0.613px">20M</div>
<div class="abs" style="left:373.9px;width:29.9px;top:233.0px;height:191.3px;background:#fff"></div>
<div class="abs" style="left:527.4px;width:28.9px;top:278.2px;height:146.1px;background:#fff"></div>
<div class="abs" style="left:684.0px;width:27.2px;top:264.9px;height:159.4px;background:#fff"></div>
<div class="abs" style="left:835.4px;width:27.5px;top:244.4px;height:179.9px;background:#fff"></div>
<div class="abs" style="left:987.8px;width:26.9px;top:278.9px;height:145.4px;background:#fff"></div>
<div class="abs" style="left:1134.2px;width:28.2px;top:273.6px;height:150.7px;background:#fff"></div>
<div class="bar g" style="left:376.7px;width:24.3px;top:235.0px;height:42.0px"></div>
<div class="bar y" style="left:376.7px;width:24.3px;top:276.2px;height:137.8px"></div>
<div class="bar r" style="left:376.7px;width:24.3px;top:413.5px;height:13.8px"></div>
<div class="dl" style="left:374px;top:250.3px">3</div>
<div class="dl" style="left:374px;top:339.5px;font-weight:400">10</div>
<div class="dl" style="left:374px;top:415.1px">1</div>
<div class="bar g" style="left:530.2px;width:23.3px;top:328.6px;height:98.7px"></div>
<div class="bar r" style="left:530.2px;width:23.3px;top:280.2px;height:48.8px"></div>
<div class="dl" style="left:527px;top:299.1px">50</div>
<div class="dl" style="left:527px;top:372.5px">103</div>
<div class="bar g" style="left:686.8px;width:21.6px;top:330.7px;height:96.6px"></div>
<div class="bar r" style="left:686.8px;width:21.6px;top:266.9px;height:64.1px"></div>
<div class="bar g" style="left:838.2px;width:21.9px;top:266.2px;height:161.1px"></div>
<div class="bar r" style="left:838.2px;width:21.9px;top:246.4px;height:20.6px"></div>
<div class="bar g" style="left:990.6px;width:21.3px;top:316.1px;height:111.2px"></div>
<div class="bar y" style="left:990.6px;width:21.3px;top:296.9px;height:20.1px"></div>
<div class="bar r" style="left:990.6px;width:21.3px;top:280.9px;height:16.6px"></div>
<div class="bar g" style="left:1137px;width:11.1px;top:275.6px;height:151.7px"></div>
<div class="bar r" style="left:1148.1px;width:11.5px;top:333.8px;height:93.5px"></div>
<div class="abs" style="left:8.5px;top:443.9px;width:1191px;height:37.5px;background:#071022"></div>
<div class="abs" style="left:13.10px;top:447.78px;font-size:10.3px;line-height:12px;color:#fff;white-space:nowrap;letter-spacing:-0.485px;font-weight:700">Project Name</div>
<div class="abs" style="left:125.5px;top:443.9px;height:37.5px;width:1px;background:#232a3e"></div>
<div class="abs" style="left:130.75px;top:447.78px;font-size:10.3px;line-height:12px;color:#fff;white-space:nowrap;letter-spacing:-0.677px;font-weight:700">Planned</div>
<div class="abs" style="left:130.75px;top:460.78px;font-size:10.3px;line-height:12px;color:#fff;white-space:nowrap;letter-spacing:-0.866px;font-weight:700">Finish</div>
<div class="abs" style="left:188.5px;top:443.9px;height:37.5px;width:1px;background:#232a3e"></div>
<div class="abs" style="left:193.75px;top:447.78px;font-size:10.3px;line-height:12px;color:#fff;white-space:nowrap;letter-spacing:-0.722px;font-weight:700">Actual Finish</div>
<div class="abs" style="left:255.0px;top:443.9px;height:37.5px;width:1px;background:#232a3e"></div>
<div class="abs" style="left:259.50px;top:447.78px;font-size:10.3px;line-height:12px;color:#fff;white-space:nowrap;letter-spacing:-0.635px;font-weight:700">Budget</div>
<div class="abs" style="left:259.50px;top:460.78px;font-size:10.3px;line-height:12px;color:#fff;white-space:nowrap;letter-spacing:-0.445px;font-weight:700">Original</div>
<div class="abs" style="left:319.0px;top:443.9px;height:37.5px;width:1px;background:#232a3e"></div>
<div class="abs" style="left:324.00px;top:447.78px;font-size:10.3px;line-height:12px;color:#fff;white-space:nowrap;letter-spacing:-0.701px;font-weight:700">Budget This</div>
<div class="abs" style="left:324.00px;top:460.78px;font-size:10.3px;line-height:12px;color:#fff;white-space:nowrap;letter-spacing:-0.756px;font-weight:700">Year</div>
<div class="abs" style="left:384.0px;top:443.9px;height:37.5px;width:1px;background:#9a9ea8"></div>
<div class="abs" style="left:389.50px;top:447.78px;font-size:10.3px;line-height:12px;color:#fff;white-space:nowrap;letter-spacing:-0.550px;font-weight:700">Contract</div>
<div class="abs" style="left:389.50px;top:460.78px;font-size:10.3px;line-height:12px;color:#fff;white-space:nowrap;letter-spacing:-0.666px;font-weight:700">Value</div>
<div class="abs" style="left:452.0px;top:443.9px;height:37.5px;width:1px;background:#232a3e"></div>
<div class="abs" style="left:456.50px;top:447.78px;font-size:10.3px;line-height:12px;color:#fff;white-space:nowrap;letter-spacing:-0.754px;font-weight:700">Change</div>
<div class="abs" style="left:456.50px;top:460.78px;font-size:10.3px;line-height:12px;color:#fff;white-space:nowrap;letter-spacing:-0.656px;font-weight:700">Orders</div>
<div class="abs" style="left:512.0px;top:443.9px;height:37.5px;width:1px;background:#232a3e"></div>
<div class="abs" style="left:517.00px;top:447.78px;font-size:10.3px;line-height:12px;color:#fff;white-space:nowrap;letter-spacing:-0.876px;font-weight:700">Revised</div>
<div class="abs" style="left:517.00px;top:460.78px;font-size:10.3px;line-height:12px;color:#fff;white-space:nowrap;letter-spacing:-0.550px;font-weight:700">Contract</div>
<div class="abs" style="left:577.5px;top:443.9px;height:37.5px;width:1px;background:#232a3e"></div>
<div class="abs" style="left:583.75px;top:447.78px;font-size:10.3px;line-height:12px;color:#fff;white-space:nowrap;letter-spacing:-0.655px;font-weight:700">% Plan</div>
<div class="abs" style="left:635.5px;top:443.9px;height:37.5px;width:1px;background:#232a3e"></div>
<div class="abs" style="left:640.75px;top:447.78px;font-size:10.3px;line-height:12px;color:#fff;white-space:nowrap;letter-spacing:0.000px;font-weight:700">%</div>
<div class="abs" style="left:640.75px;top:460.78px;font-size:10.3px;line-height:12px;color:#fff;white-space:nowrap;letter-spacing:-0.696px;font-weight:700">Actual</div>
<div class="abs" style="left:682.0px;top:443.9px;height:37.5px;width:1px;background:#232a3e"></div>
<div class="abs" style="left:688.00px;top:447.78px;font-size:10.3px;line-height:12px;color:#fff;white-space:nowrap;letter-spacing:-0.612px;font-weight:700">Invoiced</div>
<div class="abs" style="left:750.5px;top:443.9px;height:37.5px;width:1px;background:#232a3e"></div>
<div class="abs" style="left:756.75px;top:447.78px;font-size:10.3px;line-height:12px;color:#fff;white-space:nowrap;letter-spacing:-0.584px;font-weight:700">Paid</div>
<div class="abs" style="left:814.0px;top:443.9px;height:37.5px;width:1px;background:#232a3e"></div>
<div class="abs" style="left:820.00px;top:447.78px;font-size:10.3px;line-height:12px;color:#fff;white-space:nowrap;letter-spacing:-0.876px;font-weight:700">Claims</div>
<div class="abs" style="left:820.00px;top:460.78px;font-size:10.3px;line-height:12px;color:#fff;white-space:nowrap;letter-spacing:-0.884px;font-weight:700">Exposure</div>
<div class="abs" style="left:869.0px;top:443.9px;height:37.5px;width:1px;background:#232a3e"></div>
<div class="abs" style="left:875.00px;top:447.78px;font-size:10.3px;line-height:12px;color:#fff;white-space:nowrap;letter-spacing:-1.353px;font-weight:700">Risk</div>
<div class="abs" style="left:875.00px;top:460.78px;font-size:10.3px;line-height:12px;color:#fff;white-space:nowrap;letter-spacing:-0.991px;font-weight:700">Expsoure</div>
<div class="abs" style="left:919.5px;top:443.9px;height:37.5px;width:1px;background:#232a3e"></div>
<div class="abs" style="left:925.00px;top:447.78px;font-size:10.3px;line-height:12px;color:#fff;white-space:nowrap;letter-spacing:-0.720px;font-weight:700">Schedule</div>
<div class="abs" style="left:970.0px;top:443.9px;height:37.5px;width:1px;background:#232a3e"></div>
<div class="abs" style="left:975.75px;top:447.78px;font-size:10.3px;line-height:12px;color:#fff;white-space:nowrap;letter-spacing:-0.853px;font-weight:700">Scope</div>
<div class="abs" style="left:1008.5px;top:443.9px;height:37.5px;width:1px;background:#232a3e"></div>
<div class="abs" style="left:1014.00px;top:447.78px;font-size:10.3px;line-height:12px;color:#fff;white-space:nowrap;letter-spacing:-0.863px;font-weight:700">Cost</div>
<div class="abs" style="left:1045.9px;top:443.9px;height:37.5px;width:1px;background:#232a3e"></div>
<div class="abs" style="left:1051.60px;top:447.78px;font-size:10.3px;line-height:12px;color:#fff;white-space:nowrap;letter-spacing:-1.353px;font-weight:700">Risk</div>
<div class="abs" style="left:1079.8px;top:443.9px;height:37.5px;width:1px;background:#9a9ea8"></div>
<div class="abs" style="left:1085.30px;top:447.78px;font-size:10.3px;line-height:12px;color:#fff;white-space:nowrap;letter-spacing:-1.054px;font-weight:700">Issues</div>
<div class="abs" style="left:1117.1px;top:443.9px;height:37.5px;width:1px;background:#232a3e"></div>
<div class="abs" style="left:1122.30px;top:447.78px;font-size:10.3px;line-height:12px;color:#fff;white-space:nowrap;letter-spacing:-0.876px;font-weight:700">Claims</div>
<div class="abs" style="left:1156.9px;top:443.9px;height:37.5px;width:1px;background:#232a3e"></div>
<div class="abs" style="left:1162.00px;top:447.78px;font-size:10.3px;line-height:12px;color:#fff;white-space:nowrap;letter-spacing:-0.637px;font-weight:700">Project</div>
<svg class="abs" style="left:13px;top:472.3px" width="9" height="5" viewBox="0 0 9 5"><path d="M0.2 0.3 L8.8 0.3 L4.5 4.8 Z" fill="#fff"/></svg>
<div class="abs" style="left:0;top:0;width:1214px;height:688.2px;overflow:hidden">
<div class="abs" style="left:13.30px;top:485.97px;font-size:10.2px;line-height:12px;color:#575961;white-space:nowrap;letter-spacing:-0.257px">Project P1480</div>
<div class="abs" style="left:130.75px;top:485.97px;font-size:10.2px;line-height:12px;color:#575961;white-space:nowrap;letter-spacing:-0.015px">10/03/2018</div>
<div class="abs" style="left:193.75px;top:485.97px;font-size:10.2px;line-height:12px;color:#575961;white-space:nowrap;letter-spacing:0.069px">11/29/2018</div>
<div class="abs" style="left:267.54px;top:485.97px;font-size:10.2px;line-height:12px;color:#575961;white-space:nowrap;letter-spacing:-0.399px">12,000,000</div>
<div class="abs" style="left:338.43px;top:485.97px;font-size:10.2px;line-height:12px;color:#575961;white-space:nowrap;letter-spacing:-0.414px">3,600,000</div>
<div class="abs" style="left:400.04px;top:485.97px;font-size:10.2px;line-height:12px;color:#575961;white-space:nowrap;letter-spacing:-0.399px">34,569,800</div>
<div class="abs" style="left:501.83px;top:485.97px;font-size:10.2px;line-height:12px;color:#575961;white-space:nowrap;letter-spacing:0.000px">0</div>
<div class="abs" style="left:527.04px;top:485.97px;font-size:10.2px;line-height:12px;color:#575961;white-space:nowrap;letter-spacing:-0.399px">34,569,800</div>
<div class="abs" style="left:593.95px;top:485.97px;font-size:10.2px;line-height:12px;color:#575961;white-space:nowrap;letter-spacing:-0.495px">100.00%</div>
<div class="abs" style="left:646.84px;top:485.97px;font-size:10.2px;line-height:12px;color:#575961;white-space:nowrap;letter-spacing:-0.537px">86.00%</div>
<div class="abs" style="left:704.68px;top:485.97px;font-size:10.2px;line-height:12px;color:#575961;white-space:nowrap;letter-spacing:-0.414px">4,832,161</div>
<div class="abs" style="left:768.68px;top:485.97px;font-size:10.2px;line-height:12px;color:#575961;white-space:nowrap;letter-spacing:-0.414px">3,865,729</div>
<div class="abs" style="left:859.33px;top:485.97px;font-size:10.2px;line-height:12px;color:#575961;white-space:nowrap;letter-spacing:0.000px">0</div>
<div class="abs" style="left:881.24px;top:485.97px;font-size:10.2px;line-height:12px;color:#575961;white-space:nowrap;letter-spacing:-0.394px">800,000</div>
<span class="dot" style="left:941.0px;top:488.0px;width:9px;height:9px;background:#01b8aa"></span>
<span class="dot" style="left:985.5px;top:488.0px;width:9px;height:9px;background:#01b8aa"></span>
<span class="dot" style="left:1014.0px;top:488.0px;width:9px;height:9px;background:#fd625e"></span>
<span class="dot" style="left:1051.5px;top:488.0px;width:9px;height:9px;background:#fd625e"></span>
<span class="dot" style="left:1086.0px;top:488.0px;width:9px;height:9px;background:#fd625e"></span>
<span class="dot" style="left:1122.5px;top:488.0px;width:9px;height:9px;background:#01b8aa"></span>
<span class="dot" style="left:1162.5px;top:488.0px;width:9px;height:9px;background:#f2c94c"></span>
<div class="abs" style="left:8.5px;top:501.20px;width:1191px;height:19.8px;background:#ebecef"></div>
<div class="abs" style="left:13.30px;top:505.77px;font-size:10.2px;line-height:12px;color:#575961;white-space:nowrap;letter-spacing:-0.257px">Project P1460</div>
<div class="abs" style="left:130.75px;top:505.77px;font-size:10.2px;line-height:12px;color:#575961;white-space:nowrap;letter-spacing:-0.015px">02/06/2018</div>
<div class="abs" style="left:193.75px;top:505.77px;font-size:10.2px;line-height:12px;color:#575961;white-space:nowrap;letter-spacing:-0.015px">01/31/2019</div>
<div class="abs" style="left:267.54px;top:505.77px;font-size:10.2px;line-height:12px;color:#575961;white-space:nowrap;letter-spacing:-0.399px">20,000,000</div>
<div class="abs" style="left:338.43px;top:505.77px;font-size:10.2px;line-height:12px;color:#575961;white-space:nowrap;letter-spacing:-0.414px">6,000,000</div>
<div class="abs" style="left:400.04px;top:505.77px;font-size:10.2px;line-height:12px;color:#575961;white-space:nowrap;letter-spacing:-0.399px">15,883,018</div>
<div class="abs" style="left:501.83px;top:505.77px;font-size:10.2px;line-height:12px;color:#575961;white-space:nowrap;letter-spacing:0.000px">0</div>
<div class="abs" style="left:527.04px;top:505.77px;font-size:10.2px;line-height:12px;color:#575961;white-space:nowrap;letter-spacing:-0.399px">15,883,018</div>
<div class="abs" style="left:593.95px;top:505.77px;font-size:10.2px;line-height:12px;color:#575961;white-space:nowrap;letter-spacing:-0.495px">100.00%</div>
<div class="abs" style="left:646.84px;top:505.77px;font-size:10.2px;line-height:12px;color:#575961;white-space:nowrap;letter-spacing:-0.537px">75.00%</div>
<div class="abs" style="left:704.68px;top:505.77px;font-size:10.2px;line-height:12px;color:#575961;white-space:nowrap;letter-spacing:-0.414px">3,286,315</div>
<div class="abs" style="left:768.68px;top:505.77px;font-size:10.2px;line-height:12px;color:#575961;white-space:nowrap;letter-spacing:-0.414px">2,629,052</div>
<div class="abs" style="left:822.93px;top:505.77px;font-size:10.2px;line-height:12px;color:#575961;white-space:nowrap;letter-spacing:-0.414px">2,000,000</div>
<div class="abs" style="left:881.24px;top:505.77px;font-size:10.2px;line-height:12px;color:#575961;white-space:nowrap;letter-spacing:-0.394px">100,000</div>
<span class="dot" style="left:941.0px;top:507.5px;width:9px;height:9px;background:#fd625e"></span>
<span class="dot" style="left:985.5px;top:507.5px;width:9px;height:9px;background:#01b8aa"></span>
<span class="dot" style="left:1014.0px;top:507.5px;width:9px;height:9px;background:#f2c94c"></span>
<span class="dot" style="left:1051.5px;top:507.5px;width:9px;height:9px;background:#f2c94c"></span>
<span class="dot" style="left:1086.0px;top:507.5px;width:9px;height:9px;background:#fd625e"></span>
<span class="dot" style="left:1122.5px;top:507.5px;width:9px;height:9px;background:#f2c94c"></span>
<span class="dot" style="left:1162.5px;top:507.5px;width:9px;height:9px;background:#f5b04d"></span>
<div class="abs" style="left:13.30px;top:525.57px;font-size:10.2px;line-height:12px;color:#575961;white-space:nowrap;letter-spacing:-0.257px">Project P1450</div>
<div class="abs" style="left:130.75px;top:525.57px;font-size:10.2px;line-height:12px;color:#575961;white-space:nowrap;letter-spacing:-0.015px">03/10/2019</div>
<div class="abs" style="left:193.75px;top:525.57px;font-size:10.2px;line-height:12px;color:#575961;white-space:nowrap;letter-spacing:-0.015px">03/08/2019</div>
<div class="abs" style="left:267.54px;top:525.57px;font-size:10.2px;line-height:12px;color:#575961;white-space:nowrap;letter-spacing:-0.399px">98,000,000</div>
<div class="abs" style="left:333.04px;top:525.57px;font-size:10.2px;line-height:12px;color:#575961;white-space:nowrap;letter-spacing:-0.399px">29,400,000</div>
<div class="abs" style="left:400.04px;top:525.57px;font-size:10.2px;line-height:12px;color:#575961;white-space:nowrap;letter-spacing:-0.399px">98,499,615</div>
<div class="abs" style="left:501.83px;top:525.57px;font-size:10.2px;line-height:12px;color:#575961;white-space:nowrap;letter-spacing:0.000px">0</div>
<div class="abs" style="left:527.04px;top:525.57px;font-size:10.2px;line-height:12px;color:#575961;white-space:nowrap;letter-spacing:-0.399px">98,499,615</div>
<div class="abs" style="left:599.34px;top:525.57px;font-size:10.2px;line-height:12px;color:#575961;white-space:nowrap;letter-spacing:-0.537px">87.00%</div>
<div class="abs" style="left:646.84px;top:525.57px;font-size:10.2px;line-height:12px;color:#575961;white-space:nowrap;letter-spacing:-0.537px">54.00%</div>
<div class="abs" style="left:699.29px;top:525.57px;font-size:10.2px;line-height:12px;color:#575961;white-space:nowrap;letter-spacing:-0.399px">48,553,324</div>
<div class="abs" style="left:763.29px;top:525.57px;font-size:10.2px;line-height:12px;color:#575961;white-space:nowrap;letter-spacing:-0.399px">38,842,659</div>
<div class="abs" style="left:822.93px;top:525.57px;font-size:10.2px;line-height:12px;color:#575961;white-space:nowrap;letter-spacing:-0.414px">2,000,000</div>
<div class="abs" style="left:910.08px;top:525.57px;font-size:10.2px;line-height:12px;color:#575961;white-space:nowrap;letter-spacing:0.000px">0</div>
<span class="dot" style="left:941.0px;top:527.5px;width:9px;height:9px;background:#01b8aa"></span>
<span class="dot" style="left:985.5px;top:527.5px;width:9px;height:9px;background:#01b8aa"></span>
<span class="dot" style="left:1014.0px;top:527.5px;width:9px;height:9px;background:#fd625e"></span>
<span class="dot" style="left:1051.5px;top:527.5px;width:9px;height:9px;background:#01b8aa"></span>
<span class="dot" style="left:1086.0px;top:527.5px;width:9px;height:9px;background:#01b8aa"></span>
<span class="dot" style="left:1122.5px;top:527.5px;width:9px;height:9px;background:#f2c94c"></span>
<span class="dot" style="left:1162.5px;top:527.5px;width:9px;height:9px;background:#8cc669"></span>
<div class="abs" style="left:8.5px;top:540.80px;width:1191px;height:19.8px;background:#ebecef"></div>
<div class="abs" style="left:13.30px;top:545.37px;font-size:10.2px;line-height:12px;color:#575961;white-space:nowrap;letter-spacing:-0.257px">Project P1410</div>
<div class="abs" style="left:130.75px;top:545.37px;font-size:10.2px;line-height:12px;color:#575961;white-space:nowrap;letter-spacing:-0.015px">12/07/2018</div>
<div class="abs" style="left:193.75px;top:545.37px;font-size:10.2px;line-height:12px;color:#575961;white-space:nowrap;letter-spacing:-0.015px">12/07/2018</div>
<div class="abs" style="left:267.54px;top:545.37px;font-size:10.2px;line-height:12px;color:#575961;white-space:nowrap;letter-spacing:-0.399px">12,000,000</div>
<div class="abs" style="left:338.43px;top:545.37px;font-size:10.2px;line-height:12px;color:#575961;white-space:nowrap;letter-spacing:-0.414px">3,600,000</div>
<div class="abs" style="left:400.04px;top:545.37px;font-size:10.2px;line-height:12px;color:#575961;white-space:nowrap;letter-spacing:-0.399px">14,100,000</div>
<div class="abs" style="left:501.83px;top:545.37px;font-size:10.2px;line-height:12px;color:#575961;white-space:nowrap;letter-spacing:0.000px">0</div>
<div class="abs" style="left:527.04px;top:545.37px;font-size:10.2px;line-height:12px;color:#575961;white-space:nowrap;letter-spacing:-0.399px">14,100,000</div>
<div class="abs" style="left:599.34px;top:545.37px;font-size:10.2px;line-height:12px;color:#575961;white-space:nowrap;letter-spacing:-0.537px">65.00%</div>
<div class="abs" style="left:646.84px;top:545.37px;font-size:10.2px;line-height:12px;color:#575961;white-space:nowrap;letter-spacing:-0.537px">49.00%</div>
<div class="abs" style="left:704.68px;top:545.37px;font-size:10.2px;line-height:12px;color:#575961;white-space:nowrap;letter-spacing:-0.414px">2,407,689</div>
<div class="abs" style="left:768.68px;top:545.37px;font-size:10.2px;line-height:12px;color:#575961;white-space:nowrap;letter-spacing:-0.414px">1,926,151</div>
<div class="abs" style="left:822.93px;top:545.37px;font-size:10.2px;line-height:12px;color:#575961;white-space:nowrap;letter-spacing:-0.414px">1,800,000</div>
<div class="abs" style="left:881.24px;top:545.37px;font-size:10.2px;line-height:12px;color:#575961;white-space:nowrap;letter-spacing:-0.394px">800,000</div>
<span class="dot" style="left:941.0px;top:547.5px;width:9px;height:9px;background:#01b8aa"></span>
<span class="dot" style="left:985.5px;top:547.5px;width:9px;height:9px;background:#01b8aa"></span>
<span class="dot" style="left:1014.0px;top:547.5px;width:9px;height:9px;background:#01b8aa"></span>
<span class="dot" style="left:1051.5px;top:547.5px;width:9px;height:9px;background:#fd625e"></span>
<span class="dot" style="left:1086.0px;top:547.5px;width:9px;height:9px;background:#01b8aa"></span>
<span class="dot" style="left:1122.5px;top:547.5px;width:9px;height:9px;background:#f2c94c"></span>
<span class="dot" style="left:1162.5px;top:547.5px;width:9px;height:9px;background:#52b87a"></span>
<div class="abs" style="left:13.30px;top:565.17px;font-size:10.2px;line-height:12px;color:#575961;white-space:nowrap;letter-spacing:-0.257px">Project P1390</div>
<div class="abs" style="left:130.75px;top:565.17px;font-size:10.2px;line-height:12px;color:#575961;white-space:nowrap;letter-spacing:-0.015px">10/07/2018</div>
<div class="abs" style="left:193.75px;top:565.17px;font-size:10.2px;line-height:12px;color:#575961;white-space:nowrap;letter-spacing:0.069px">11/25/2018</div>
<div class="abs" style="left:262.15px;top:565.17px;font-size:10.2px;line-height:12px;color:#575961;white-space:nowrap;letter-spacing:-0.387px">150,000,000</div>
<div class="abs" style="left:333.04px;top:565.17px;font-size:10.2px;line-height:12px;color:#575961;white-space:nowrap;letter-spacing:-0.399px">45,000,000</div>
<div class="abs" style="left:394.65px;top:565.17px;font-size:10.2px;line-height:12px;color:#575961;white-space:nowrap;letter-spacing:-0.387px">130,001,949</div>
<div class="abs" style="left:460.04px;top:565.17px;font-size:10.2px;line-height:12px;color:#575961;white-space:nowrap;letter-spacing:-0.399px">91,144,623</div>
<div class="abs" style="left:521.65px;top:565.17px;font-size:10.2px;line-height:12px;color:#575961;white-space:nowrap;letter-spacing:-0.387px">221,146,573</div>
<div class="abs" style="left:593.95px;top:565.17px;font-size:10.2px;line-height:12px;color:#575961;white-space:nowrap;letter-spacing:-0.495px">100.00%</div>
<div class="abs" style="left:646.84px;top:565.17px;font-size:10.2px;line-height:12px;color:#575961;white-space:nowrap;letter-spacing:-0.537px">85.00%</div>
<div class="abs" style="left:693.90px;top:565.17px;font-size:10.2px;line-height:12px;color:#575961;white-space:nowrap;letter-spacing:-0.312px">114,779,160</div>
<div class="abs" style="left:763.29px;top:565.17px;font-size:10.2px;line-height:12px;color:#575961;white-space:nowrap;letter-spacing:-0.399px">91,823,328</div>
<div class="abs" style="left:822.93px;top:565.17px;font-size:10.2px;line-height:12px;color:#575961;white-space:nowrap;letter-spacing:-0.414px">3,800,000</div>
<div class="abs" style="left:881.24px;top:565.17px;font-size:10.2px;line-height:12px;color:#575961;white-space:nowrap;letter-spacing:-0.394px">800,000</div>
<span class="dot" style="left:941.0px;top:567.0px;width:9px;height:9px;background:#fd625e"></span>
<span class="dot" style="left:985.5px;top:567.0px;width:9px;height:9px;background:#fd625e"></span>
<span class="dot" style="left:1014.0px;top:567.0px;width:9px;height:9px;background:#01b8aa"></span>
<span class="dot" style="left:1051.5px;top:567.0px;width:9px;height:9px;background:#fd625e"></span>
<span class="dot" style="left:1086.0px;top:567.0px;width:9px;height:9px;background:#01b8aa"></span>
<span class="dot" style="left:1122.5px;top:567.0px;width:9px;height:9px;background:#f2c94c"></span>
<span class="dot" style="left:1162.5px;top:567.0px;width:9px;height:9px;background:#f2c94c"></span>
<div class="abs" style="left:8.5px;top:580.40px;width:1191px;height:19.8px;background:#ebecef"></div>
<div class="abs" style="left:13.30px;top:584.97px;font-size:10.2px;line-height:12px;color:#575961;white-space:nowrap;letter-spacing:-0.257px">Project P1350</div>
<div class="abs" style="left:130.75px;top:584.97px;font-size:10.2px;line-height:12px;color:#575961;white-space:nowrap;letter-spacing:-0.015px">06/04/2019</div>
<div class="abs" style="left:193.75px;top:584.97px;font-size:10.2px;line-height:12px;color:#575961;white-space:nowrap;letter-spacing:-0.015px">06/04/2019</div>
<div class="abs" style="left:267.54px;top:584.97px;font-size:10.2px;line-height:12px;color:#575961;white-space:nowrap;letter-spacing:-0.399px">60,000,000</div>
<div class="abs" style="left:333.04px;top:584.97px;font-size:10.2px;line-height:12px;color:#575961;white-space:nowrap;letter-spacing:-0.399px">18,000,000</div>
<div class="abs" style="left:400.04px;top:584.97px;font-size:10.2px;line-height:12px;color:#575961;white-space:nowrap;letter-spacing:-0.399px">59,893,205</div>
<div class="abs" style="left:501.83px;top:584.97px;font-size:10.2px;line-height:12px;color:#575961;white-space:nowrap;letter-spacing:0.000px">0</div>
<div class="abs" style="left:527.04px;top:584.97px;font-size:10.2px;line-height:12px;color:#575961;white-space:nowrap;letter-spacing:-0.399px">59,893,205</div>
<div class="abs" style="left:599.34px;top:584.97px;font-size:10.2px;line-height:12px;color:#575961;white-space:nowrap;letter-spacing:-0.537px">32.00%</div>
<div class="abs" style="left:646.84px;top:584.97px;font-size:10.2px;line-height:12px;color:#575961;white-space:nowrap;letter-spacing:-0.537px">25.00%</div>
<div class="abs" style="left:704.68px;top:584.97px;font-size:10.2px;line-height:12px;color:#575961;white-space:nowrap;letter-spacing:-0.414px">8,581,300</div>
<div class="abs" style="left:768.68px;top:584.97px;font-size:10.2px;line-height:12px;color:#575961;white-space:nowrap;letter-spacing:-0.414px">6,865,040</div>
<div class="abs" style="left:822.93px;top:584.97px;font-size:10.2px;line-height:12px;color:#575961;white-space:nowrap;letter-spacing:-0.414px">3,800,000</div>
<div class="abs" style="left:881.24px;top:584.97px;font-size:10.2px;line-height:12px;color:#575961;white-space:nowrap;letter-spacing:-0.394px">800,000</div>
<span class="dot" style="left:941.0px;top:587.0px;width:9px;height:9px;background:#fd625e"></span>
<span class="dot" style="left:985.5px;top:587.0px;width:9px;height:9px;background:#01b8aa"></span>
<span class="dot" style="left:1014.0px;top:587.0px;width:9px;height:9px;background:#f2c94c"></span>
<span class="dot" style="left:1051.5px;top:587.0px;width:9px;height:9px;background:#fd625e"></span>
<span class="dot" style="left:1086.0px;top:587.0px;width:9px;height:9px;background:#f2c94c"></span>
<span class="dot" style="left:1122.5px;top:587.0px;width:9px;height:9px;background:#f2c94c"></span>
<span class="dot" style="left:1162.5px;top:587.0px;width:9px;height:9px;background:#f2c94c"></span>
<div class="abs" style="left:13.30px;top:604.77px;font-size:10.2px;line-height:12px;color:#575961;white-space:nowrap;letter-spacing:-0.257px">Project P1340</div>
<div class="abs" style="left:130.75px;top:604.77px;font-size:10.2px;line-height:12px;color:#575961;white-space:nowrap;letter-spacing:-0.015px">08/20/2017</div>
<div class="abs" style="left:193.75px;top:604.77px;font-size:10.2px;line-height:12px;color:#575961;white-space:nowrap;letter-spacing:-0.015px">01/31/2019</div>
<div class="abs" style="left:272.93px;top:604.77px;font-size:10.2px;line-height:12px;color:#575961;white-space:nowrap;letter-spacing:-0.414px">5,000,000</div>
<div class="abs" style="left:338.43px;top:604.77px;font-size:10.2px;line-height:12px;color:#575961;white-space:nowrap;letter-spacing:-0.414px">1,500,000</div>
<div class="abs" style="left:405.43px;top:604.77px;font-size:10.2px;line-height:12px;color:#575961;white-space:nowrap;letter-spacing:-0.414px">6,575,154</div>
<div class="abs" style="left:501.83px;top:604.77px;font-size:10.2px;line-height:12px;color:#575961;white-space:nowrap;letter-spacing:0.000px">0</div>
<div class="abs" style="left:532.43px;top:604.77px;font-size:10.2px;line-height:12px;color:#575961;white-space:nowrap;letter-spacing:-0.414px">6,575,154</div>
<div class="abs" style="left:593.95px;top:604.77px;font-size:10.2px;line-height:12px;color:#575961;white-space:nowrap;letter-spacing:-0.495px">100.00%</div>
<div class="abs" style="left:646.84px;top:604.77px;font-size:10.2px;line-height:12px;color:#575961;white-space:nowrap;letter-spacing:-0.537px">68.00%</div>
<div class="abs" style="left:704.68px;top:604.77px;font-size:10.2px;line-height:12px;color:#575961;white-space:nowrap;letter-spacing:-0.414px">3,777,635</div>
<div class="abs" style="left:768.68px;top:604.77px;font-size:10.2px;line-height:12px;color:#575961;white-space:nowrap;letter-spacing:-0.414px">3,022,108</div>
<div class="abs" style="left:822.93px;top:604.77px;font-size:10.2px;line-height:12px;color:#575961;white-space:nowrap;letter-spacing:-0.414px">3,800,000</div>
<div class="abs" style="left:881.24px;top:604.77px;font-size:10.2px;line-height:12px;color:#575961;white-space:nowrap;letter-spacing:-0.394px">800,000</div>
<span class="dot" style="left:941.0px;top:606.5px;width:9px;height:9px;background:#01b8aa"></span>
<span class="dot" style="left:985.5px;top:606.5px;width:9px;height:9px;background:#01b8aa"></span>
<span class="dot" style="left:1014.0px;top:606.5px;width:9px;height:9px;background:#fd625e"></span>
<span class="dot" style="left:1051.5px;top:606.5px;width:9px;height:9px;background:#fd625e"></span>
<span class="dot" style="left:1086.0px;top:606.5px;width:9px;height:9px;background:#fd625e"></span>
<span class="dot" style="left:1122.5px;top:606.5px;width:9px;height:9px;background:#f2c94c"></span>
<span class="dot" style="left:1162.5px;top:606.5px;width:9px;height:9px;background:#f2c94c"></span>
<div class="abs" style="left:8.5px;top:620.00px;width:1191px;height:19.8px;background:#ebecef"></div>
<div class="abs" style="left:13.30px;top:624.57px;font-size:10.2px;line-height:12px;color:#575961;white-space:nowrap;letter-spacing:-0.257px">Project P1320</div>
<div class="abs" style="left:130.75px;top:624.57px;font-size:10.2px;line-height:12px;color:#575961;white-space:nowrap;letter-spacing:-0.015px">12/30/2018</div>
<div class="abs" style="left:193.75px;top:624.57px;font-size:10.2px;line-height:12px;color:#575961;white-space:nowrap;letter-spacing:-0.015px">05/20/2019</div>
<div class="abs" style="left:262.15px;top:624.57px;font-size:10.2px;line-height:12px;color:#575961;white-space:nowrap;letter-spacing:-0.387px">133,000,000</div>
<div class="abs" style="left:333.04px;top:624.57px;font-size:10.2px;line-height:12px;color:#575961;white-space:nowrap;letter-spacing:-0.399px">39,900,000</div>
<div class="abs" style="left:394.65px;top:624.57px;font-size:10.2px;line-height:12px;color:#575961;white-space:nowrap;letter-spacing:-0.387px">135,800,000</div>
<div class="abs" style="left:465.43px;top:624.57px;font-size:10.2px;line-height:12px;color:#575961;white-space:nowrap;letter-spacing:-0.414px">2,154,461</div>
<div class="abs" style="left:521.65px;top:624.57px;font-size:10.2px;line-height:12px;color:#575961;white-space:nowrap;letter-spacing:-0.387px">137,954,461</div>
<div class="abs" style="left:599.34px;top:624.57px;font-size:10.2px;line-height:12px;color:#575961;white-space:nowrap;letter-spacing:-0.537px">50.00%</div>
<div class="abs" style="left:646.84px;top:624.57px;font-size:10.2px;line-height:12px;color:#575961;white-space:nowrap;letter-spacing:-0.537px">50.00%</div>
<div class="abs" style="left:699.29px;top:624.57px;font-size:10.2px;line-height:12px;color:#575961;white-space:nowrap;letter-spacing:-0.399px">45,607,717</div>
<div class="abs" style="left:763.29px;top:624.57px;font-size:10.2px;line-height:12px;color:#575961;white-space:nowrap;letter-spacing:-0.399px">36,486,174</div>
<div class="abs" style="left:822.93px;top:624.57px;font-size:10.2px;line-height:12px;color:#575961;white-space:nowrap;letter-spacing:-0.414px">3,800,000</div>
<div class="abs" style="left:881.24px;top:624.57px;font-size:10.2px;line-height:12px;color:#575961;white-space:nowrap;letter-spacing:-0.394px">800,000</div>
<span class="dot" style="left:941.0px;top:626.5px;width:9px;height:9px;background:#fd625e"></span>
<span class="dot" style="left:985.5px;top:626.5px;width:9px;height:9px;background:#fd625e"></span>
<span class="dot" style="left:1014.0px;top:626.5px;width:9px;height:9px;background:#01b8aa"></span>
<span class="dot" style="left:1051.5px;top:626.5px;width:9px;height:9px;background:#fd625e"></span>
<span class="dot" style="left:1086.0px;top:626.5px;width:9px;height:9px;background:#01b8aa"></span>
<span class="dot" style="left:1122.5px;top:626.5px;width:9px;height:9px;background:#f2c94c"></span>
<span class="dot" style="left:1162.5px;top:626.5px;width:9px;height:9px;background:#f2c94c"></span>
<div class="abs" style="left:13.30px;top:644.37px;font-size:10.2px;line-height:12px;color:#575961;white-space:nowrap;letter-spacing:-0.257px">Project P1290</div>
<div class="abs" style="left:130.75px;top:644.37px;font-size:10.2px;line-height:12px;color:#575961;white-space:nowrap;letter-spacing:-0.015px">09/16/2018</div>
<div class="abs" style="left:193.75px;top:644.37px;font-size:10.2px;line-height:12px;color:#575961;white-space:nowrap;letter-spacing:-0.015px">01/13/2019</div>
<div class="abs" style="left:267.54px;top:644.37px;font-size:10.2px;line-height:12px;color:#575961;white-space:nowrap;letter-spacing:-0.399px">15,000,000</div>
<div class="abs" style="left:338.43px;top:644.37px;font-size:10.2px;line-height:12px;color:#575961;white-space:nowrap;letter-spacing:-0.414px">4,500,000</div>
<div class="abs" style="left:400.04px;top:644.37px;font-size:10.2px;line-height:12px;color:#575961;white-space:nowrap;letter-spacing:-0.399px">13,347,873</div>
<div class="abs" style="left:501.83px;top:644.37px;font-size:10.2px;line-height:12px;color:#575961;white-space:nowrap;letter-spacing:0.000px">0</div>
<div class="abs" style="left:527.04px;top:644.37px;font-size:10.2px;line-height:12px;color:#575961;white-space:nowrap;letter-spacing:-0.399px">13,347,873</div>
<div class="abs" style="left:599.34px;top:644.37px;font-size:10.2px;line-height:12px;color:#575961;white-space:nowrap;letter-spacing:-0.537px">96.00%</div>
<div class="abs" style="left:646.84px;top:644.37px;font-size:10.2px;line-height:12px;color:#575961;white-space:nowrap;letter-spacing:-0.537px">96.00%</div>
<div class="abs" style="left:704.68px;top:644.37px;font-size:10.2px;line-height:12px;color:#575961;white-space:nowrap;letter-spacing:-0.414px">5,472,885</div>
<div class="abs" style="left:768.68px;top:644.37px;font-size:10.2px;line-height:12px;color:#575961;white-space:nowrap;letter-spacing:-0.414px">4,378,308</div>
<div class="abs" style="left:822.93px;top:644.37px;font-size:10.2px;line-height:12px;color:#575961;white-space:nowrap;letter-spacing:-0.414px">2,000,000</div>
<div class="abs" style="left:881.24px;top:644.37px;font-size:10.2px;line-height:12px;color:#575961;white-space:nowrap;letter-spacing:-0.394px">800,000</div>
<span class="dot" style="left:941.0px;top:646.5px;width:9px;height:9px;background:#01b8aa"></span>
<span class="dot" style="left:985.5px;top:646.5px;width:9px;height:9px;background:#01b8aa"></span>
<span class="dot" style="left:1014.0px;top:646.5px;width:9px;height:9px;background:#fd625e"></span>
<span class="dot" style="left:1051.5px;top:646.5px;width:9px;height:9px;background:#fd625e"></span>
<span class="dot" style="left:1086.0px;top:646.5px;width:9px;height:9px;background:#f2c94c"></span>
<span class="dot" style="left:1122.5px;top:646.5px;width:9px;height:9px;background:#f2c94c"></span>
<span class="dot" style="left:1162.5px;top:646.5px;width:9px;height:9px;background:#b5c95a"></span>
<div class="abs" style="left:8.5px;top:659.60px;width:1191px;height:19.8px;background:#ebecef"></div>
<div class="abs" style="left:13.30px;top:664.17px;font-size:10.2px;line-height:12px;color:#575961;white-space:nowrap;letter-spacing:-0.257px">Project P1280</div>
<div class="abs" style="left:130.75px;top:664.17px;font-size:10.2px;line-height:12px;color:#575961;white-space:nowrap;letter-spacing:-0.015px">12/18/2018</div>
<div class="abs" style="left:193.75px;top:664.17px;font-size:10.2px;line-height:12px;color:#575961;white-space:nowrap;letter-spacing:-0.015px">12/16/2018</div>
<div class="abs" style="left:267.54px;top:664.17px;font-size:10.2px;line-height:12px;color:#575961;white-space:nowrap;letter-spacing:-0.399px">15,000,000</div>
<div class="abs" style="left:338.43px;top:664.17px;font-size:10.2px;line-height:12px;color:#575961;white-space:nowrap;letter-spacing:-0.414px">4,500,000</div>
<div class="abs" style="left:400.04px;top:664.17px;font-size:10.2px;line-height:12px;color:#575961;white-space:nowrap;letter-spacing:-0.399px">14,100,000</div>
<div class="abs" style="left:501.83px;top:664.17px;font-size:10.2px;line-height:12px;color:#575961;white-space:nowrap;letter-spacing:0.000px">0</div>
<div class="abs" style="left:527.04px;top:664.17px;font-size:10.2px;line-height:12px;color:#575961;white-space:nowrap;letter-spacing:-0.399px">14,100,000</div>
<div class="abs" style="left:599.34px;top:664.17px;font-size:10.2px;line-height:12px;color:#575961;white-space:nowrap;letter-spacing:-0.537px">97.00%</div>
<div class="abs" style="left:646.84px;top:664.17px;font-size:10.2px;line-height:12px;color:#575961;white-space:nowrap;letter-spacing:-0.537px">97.00%</div>
<div class="abs" style="left:704.68px;top:664.17px;font-size:10.2px;line-height:12px;color:#575961;white-space:nowrap;letter-spacing:-0.414px">7,120,371</div>
<div class="abs" style="left:768.68px;top:664.17px;font-size:10.2px;line-height:12px;color:#575961;white-space:nowrap;letter-spacing:-0.414px">5,696,297</div>
<div class="abs" style="left:822.93px;top:664.17px;font-size:10.2px;line-height:12px;color:#575961;white-space:nowrap;letter-spacing:-0.414px">2,000,000</div>
<div class="abs" style="left:881.24px;top:664.17px;font-size:10.2px;line-height:12px;color:#575961;white-space:nowrap;letter-spacing:-0.394px">800,000</div>
<span class="dot" style="left:941.0px;top:666.0px;width:9px;height:9px;background:#01b8aa"></span>
<span class="dot" style="left:985.5px;top:666.0px;width:9px;height:9px;background:#01b8aa"></span>
<span class="dot" style="left:1014.0px;top:666.0px;width:9px;height:9px;background:#01b8aa"></span>
<span class="dot" style="left:1051.5px;top:666.0px;width:9px;height:9px;background:#fd625e"></span>
<span class="dot" style="left:1086.0px;top:666.0px;width:9px;height:9px;background:#01b8aa"></span>
<span class="dot" style="left:1122.5px;top:666.0px;width:9px;height:9px;background:#f2c94c"></span>
<span class="dot" style="left:1162.5px;top:666.0px;width:9px;height:9px;background:#52b87a"></span>
<div class="abs" style="left:13.30px;top:683.97px;font-size:10.2px;line-height:12px;color:#575961;white-space:nowrap;letter-spacing:-0.257px">Project P1270</div>
<div class="abs" style="left:130.75px;top:683.97px;font-size:10.2px;line-height:12px;color:#575961;white-space:nowrap;letter-spacing:-0.015px">05/21/2018</div>
<div class="abs" style="left:193.75px;top:683.97px;font-size:10.2px;line-height:12px;color:#575961;white-space:nowrap;letter-spacing:-0.015px">05/18/2018</div>
<div class="abs" style="left:267.54px;top:683.97px;font-size:10.2px;line-height:12px;color:#575961;white-space:nowrap;letter-spacing:-0.399px">18,838,718</div>
<div class="abs" style="left:338.43px;top:683.97px;font-size:10.2px;line-height:12px;color:#575961;white-space:nowrap;letter-spacing:-0.414px">5,651,634</div>
<div class="abs" style="left:400.04px;top:683.97px;font-size:10.2px;line-height:12px;color:#575961;white-space:nowrap;letter-spacing:-0.399px">14,391,699</div>
<div class="abs" style="left:501.83px;top:683.97px;font-size:10.2px;line-height:12px;color:#575961;white-space:nowrap;letter-spacing:0.000px">0</div>
<div class="abs" style="left:527.04px;top:683.97px;font-size:10.2px;line-height:12px;color:#575961;white-space:nowrap;letter-spacing:-0.399px">14,391,699</div>
<div class="abs" style="left:599.34px;top:683.97px;font-size:10.2px;line-height:12px;color:#575961;white-space:nowrap;letter-spacing:-0.537px">36.00%</div>
<div class="abs" style="left:646.84px;top:683.97px;font-size:10.2px;line-height:12px;color:#575961;white-space:nowrap;letter-spacing:-0.537px">18.00%</div>
<div class="abs" style="left:704.68px;top:683.97px;font-size:10.2px;line-height:12px;color:#575961;white-space:nowrap;letter-spacing:-0.414px">2,547,474</div>
<div class="abs" style="left:768.68px;top:683.97px;font-size:10.2px;line-height:12px;color:#575961;white-space:nowrap;letter-spacing:-0.414px">2,037,979</div>
<div class="abs" style="left:822.93px;top:683.97px;font-size:10.2px;line-height:12px;color:#575961;white-space:nowrap;letter-spacing:-0.414px">1,800,000</div>
<div class="abs" style="left:881.24px;top:683.97px;font-size:10.2px;line-height:12px;color:#575961;white-space:nowrap;letter-spacing:-0.394px">800,000</div>
<span class="dot" style="left:941.0px;top:686.0px;width:9px;height:9px;background:#fd625e"></span>
<span class="dot" style="left:985.5px;top:686.0px;width:9px;height:9px;background:#01b8aa"></span>
<span class="dot" style="left:1014.0px;top:686.0px;width:9px;height:9px;background:#f2c94c"></span>
<span class="dot" style="left:1051.5px;top:686.0px;width:9px;height:9px;background:#fd625e"></span>
<span class="dot" style="left:1086.0px;top:686.0px;width:9px;height:9px;background:#fd625e"></span>
<span class="dot" style="left:1122.5px;top:686.0px;width:9px;height:9px;background:#f2c94c"></span>
<span class="dot" style="left:1162.5px;top:686.0px;width:9px;height:9px;background:#f5b04d"></span>
<div class="abs" style="left:125.5px;top:481.4px;width:1px;height:207px;background:rgba(0,0,0,0.025)"></div>
<div class="abs" style="left:188.5px;top:481.4px;width:1px;height:207px;background:rgba(0,0,0,0.025)"></div>
<div class="abs" style="left:255.0px;top:481.4px;width:1px;height:207px;background:rgba(0,0,0,0.025)"></div>
<div class="abs" style="left:319.0px;top:481.4px;width:1px;height:207px;background:rgba(0,0,0,0.025)"></div>
<div class="abs" style="left:384.0px;top:481.4px;width:1px;height:207px;background:rgba(0,0,0,0.025)"></div>
<div class="abs" style="left:452.0px;top:481.4px;width:1px;height:207px;background:rgba(0,0,0,0.025)"></div>
<div class="abs" style="left:512.0px;top:481.4px;width:1px;height:207px;background:rgba(0,0,0,0.025)"></div>
<div class="abs" style="left:577.5px;top:481.4px;width:1px;height:207px;background:rgba(0,0,0,0.025)"></div>
<div class="abs" style="left:635.5px;top:481.4px;width:1px;height:207px;background:rgba(0,0,0,0.025)"></div>
<div class="abs" style="left:682.0px;top:481.4px;width:1px;height:207px;background:rgba(0,0,0,0.025)"></div>
<div class="abs" style="left:750.5px;top:481.4px;width:1px;height:207px;background:rgba(0,0,0,0.025)"></div>
<div class="abs" style="left:814.0px;top:481.4px;width:1px;height:207px;background:rgba(0,0,0,0.025)"></div>
<div class="abs" style="left:869.0px;top:481.4px;width:1px;height:207px;background:rgba(0,0,0,0.025)"></div>
<div class="abs" style="left:919.5px;top:481.4px;width:1px;height:207px;background:rgba(0,0,0,0.025)"></div>
<div class="abs" style="left:970.0px;top:481.4px;width:1px;height:207px;background:rgba(0,0,0,0.025)"></div>
<div class="abs" style="left:1008.5px;top:481.4px;width:1px;height:207px;background:rgba(0,0,0,0.025)"></div>
<div class="abs" style="left:1045.9px;top:481.4px;width:1px;height:207px;background:rgba(0,0,0,0.025)"></div>
<div class="abs" style="left:1079.8px;top:481.4px;width:1px;height:207px;background:rgba(0,0,0,0.025)"></div>
<div class="abs" style="left:1117.1px;top:481.4px;width:1px;height:207px;background:rgba(0,0,0,0.025)"></div>
<div class="abs" style="left:1156.9px;top:481.4px;width:1px;height:207px;background:rgba(0,0,0,0.025)"></div>
</div>
<div class="abs" style="left:1199.3px;top:444px;width:8.3px;height:237.5px;background:#f1f1f1"></div>
<div class="abs" style="left:1199.3px;top:468.8px;width:8.3px;height:141.5px;background:#c6c6c6"></div>
<svg class="abs" style="left:1199.6px;top:453px" width="8" height="6" viewBox="0 0 8 6"><path d="M0.6 5 L4 1.2 L7.4 5" fill="none" stroke="#555" stroke-width="1.2"/></svg>
<svg class="abs" style="left:1199.6px;top:667px" width="8" height="6" viewBox="0 0 8 6"><path d="M0.6 1 L4 4.8 L7.4 1" fill="none" stroke="#555" stroke-width="1.2"/></svg>
</body></html>
